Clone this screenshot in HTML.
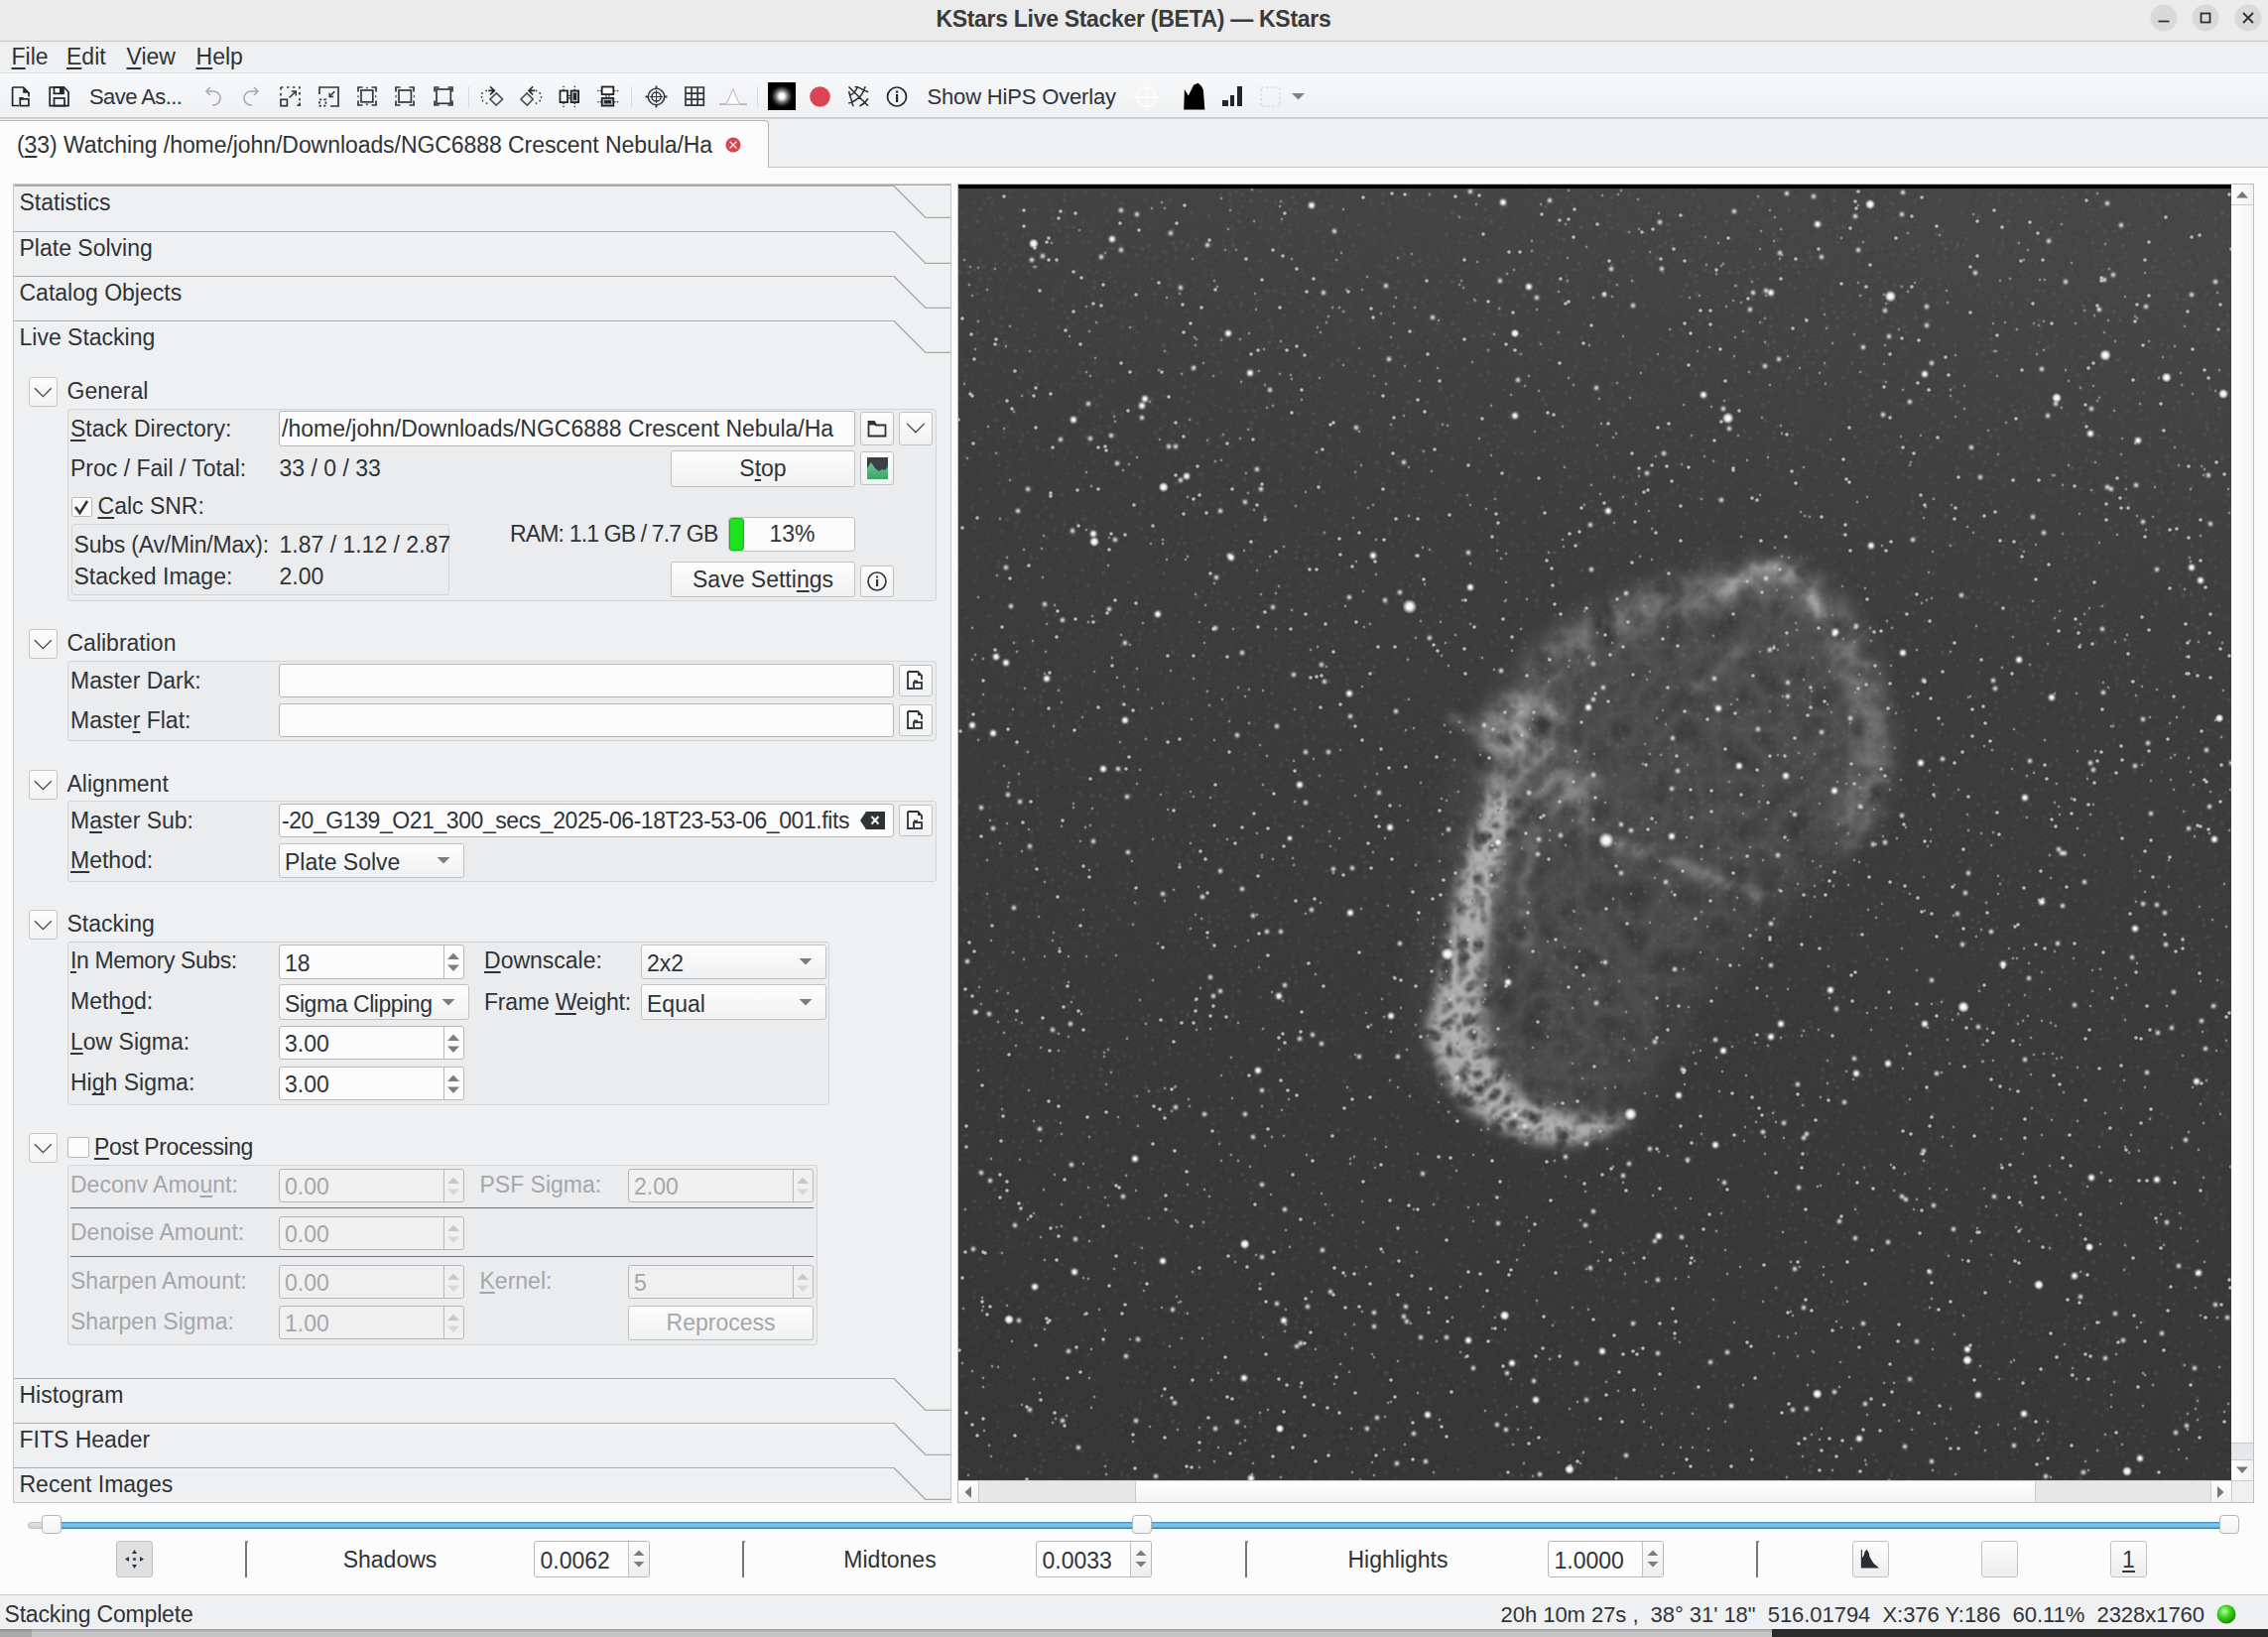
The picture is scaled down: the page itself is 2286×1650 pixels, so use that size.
<!DOCTYPE html>
<html><head><meta charset="utf-8"><style>
html,body{margin:0;padding:0;width:2286px;height:1650px;overflow:hidden;background:#fcfcfc;font-family:"Liberation Sans",sans-serif;}
u{text-decoration:underline;text-underline-offset:3px;text-decoration-thickness:2px;text-decoration-skip-ink:none;}
</style></head><body>
<div style="position:absolute;left:0px;top:0px;width:2286px;height:41px;box-sizing:border-box;background:#ebebeb;"></div>
<div style="position:absolute;left:0px;top:41px;width:2286px;height:1px;box-sizing:border-box;background:#c4c4c4;"></div>
<div style="position:absolute;left:943.4px;top:8.03px;font-size:23px;line-height:23px;color:#3a3a3a;font-weight:bold;white-space:pre;letter-spacing:-0.303px;">KStars Live Stacker (BETA) — KStars</div>
<svg style="position:absolute;left:2166.5px;top:4px;" width="28" height="28" viewBox="0 0 28 28"><circle cx="14" cy="14" r="13.5" fill="#d9d9d9"/></svg>
<svg style="position:absolute;left:2209px;top:4px;" width="28" height="28" viewBox="0 0 28 28"><circle cx="14" cy="14" r="13.5" fill="#d9d9d9"/></svg>
<svg style="position:absolute;left:2251.5px;top:4px;" width="28" height="28" viewBox="0 0 28 28"><circle cx="14" cy="14" r="13.5" fill="#d9d9d9"/></svg>
<svg style="position:absolute;left:2166.5px;top:4px;" width="28" height="28" viewBox="0 0 28 28"><path d="M8.5 17.5 H19.5" stroke="#2e2e2e" stroke-width="1.8"/></svg>
<svg style="position:absolute;left:2209px;top:4px;" width="28" height="28" viewBox="0 0 28 28"><rect x="9.5" y="9.5" width="9" height="9" fill="none" stroke="#2e2e2e" stroke-width="1.8"/></svg>
<svg style="position:absolute;left:2251.5px;top:4px;" width="28" height="28" viewBox="0 0 28 28"><path d="M9 9 L19 19 M19 9 L9 19" stroke="#2e2e2e" stroke-width="1.8"/></svg>
<div style="position:absolute;left:0px;top:42px;width:2286px;height:31px;box-sizing:border-box;background:#eff0f1;"></div>
<div style="position:absolute;left:0px;top:72.5px;width:2286px;height:2.0px;box-sizing:border-box;background:#dedfe1;"></div>
<div style="position:absolute;left:11.5px;top:46.03px;font-size:23px;line-height:23px;color:#2f3337;font-weight:normal;white-space:pre;"><u>F</u>ile</div>
<div style="position:absolute;left:67px;top:46.03px;font-size:23px;line-height:23px;color:#2f3337;font-weight:normal;white-space:pre;"><u>E</u>dit</div>
<div style="position:absolute;left:127.5px;top:46.03px;font-size:23px;line-height:23px;color:#2f3337;font-weight:normal;white-space:pre;"><u>V</u>iew</div>
<div style="position:absolute;left:197.5px;top:46.03px;font-size:23px;line-height:23px;color:#2f3337;font-weight:normal;white-space:pre;"><u>H</u>elp</div>
<div style="position:absolute;left:0px;top:74px;width:2286px;height:44px;box-sizing:border-box;background:linear-gradient(#f8f9fa,#eef0f2);"></div>
<div style="position:absolute;left:0px;top:118px;width:2286px;height:2px;box-sizing:border-box;background:#cdcfd0;"></div>
<div style="position:absolute;left:0px;top:120px;width:2286px;height:49px;box-sizing:border-box;background:#eff0f1;"></div>
<div style="position:absolute;left:0px;top:168px;width:2286px;height:1px;box-sizing:border-box;background:#c3c5c7;"></div>
<div style="position:absolute;left:-2px;top:121px;width:777px;height:49px;box-sizing:border-box;background:#fcfcfc;border-right:1.5px solid #b4b6b8;border-top:1.5px solid #b4b6b8;border-top-right-radius:4px;"></div>
<div style="position:absolute;left:17px;top:134.53px;font-size:23px;line-height:23px;color:#2f3337;font-weight:normal;white-space:pre;letter-spacing:-0.063px;">(<u>3</u>3) Watching /home/john/Downloads/NGC6888 Crescent Nebula/Ha</div>
<svg style="position:absolute;left:730px;top:137px;" width="18" height="18" viewBox="0 0 18 18"><circle cx="9" cy="9" r="7.6" fill="#da4453"/><path d="M5.6 5.6 L12.4 12.4 M12.4 5.6 L5.6 12.4" stroke="#fff" stroke-width="1.3"/></svg>
<div style="position:absolute;left:0px;top:169px;width:2286px;height:1438px;box-sizing:border-box;background:#fcfcfc;"></div>
<div style="position:absolute;left:0px;top:1607px;width:2286px;height:1px;box-sizing:border-box;background:#c9cbcd;"></div>
<div style="position:absolute;left:0px;top:1608px;width:2286px;height:34px;box-sizing:border-box;background:#eff0f1;"></div>
<div style="position:absolute;left:4.5px;top:1616.03px;font-size:23px;line-height:23px;color:#2f3337;font-weight:normal;white-space:pre;letter-spacing:-0.179px;">Stacking Complete</div>
<div style="position:absolute;left:1512.6px;top:1616.88px;font-size:22px;line-height:22px;color:#2f3337;font-weight:normal;white-space:pre;letter-spacing:-0.043px;">20h 10m 27s ,  38° 31' 18"  516.01794  X:376 Y:186  60.11%  2328x1760</div>
<svg style="position:absolute;left:2234px;top:1617px;" width="20" height="20" viewBox="0 0 20 20"><defs><radialGradient id="gg" cx="0.4" cy="0.35" r="0.65"><stop offset="0" stop-color="#b6ff9a"/><stop offset="0.5" stop-color="#3ad11c"/><stop offset="1" stop-color="#1c8a0c"/></radialGradient></defs><circle cx="10" cy="10" r="9.5" fill="url(#gg)"/></svg>
<div style="position:absolute;left:0px;top:1642px;width:2286px;height:8px;box-sizing:border-box;background:linear-gradient(#9a9a9a,#c4c4c4 40%,#c6c6c6);"></div>
<div style="position:absolute;left:0px;top:1642px;width:32px;height:8px;box-sizing:border-box;background:linear-gradient(#8a8a8a,#a8a8a8 40%,#aaaaaa);"></div>
<div style="position:absolute;left:1786px;top:1642px;width:500px;height:8px;box-sizing:border-box;background:#2b2b2b;"></div>
<svg style="position:absolute;left:11px;top:87px;" width="20" height="21" viewBox="0 0 20 21"><path d="M1.6 1 H12.5 L18 6.5 V10.5 M8 19.5 H1.6 V1" fill="none" stroke="#232629" stroke-width="1.7"/><path d="M12.2 1 L18 6.8 H12.2Z" fill="#232629"/><rect x="9.3" y="12.8" width="8.6" height="6.8" fill="none" stroke="#232629" stroke-width="1.7"/><rect x="8.5" y="11" width="4" height="2.2" fill="#232629"/></svg>
<svg style="position:absolute;left:49px;top:87px;" width="21" height="21" viewBox="0 0 21 21"><path d="M1.2 1 H15.5 L20 5.5 V19.6 H1.2 Z" fill="none" stroke="#232629" stroke-width="1.7"/><rect x="5.5" y="1" width="9.5" height="6.3" fill="none" stroke="#232629" stroke-width="1.7"/><rect x="11" y="1.5" width="3.6" height="5.5" fill="#232629"/><rect x="5.5" y="12" width="10.5" height="7.6" fill="none" stroke="#232629" stroke-width="1.7"/></svg>
<div style="position:absolute;left:90px;top:86.98px;font-size:22px;line-height:22px;color:#2f3337;font-weight:normal;white-space:pre;letter-spacing:-0.566px;">Save As...</div>
<svg style="position:absolute;left:206px;top:87px;" width="18" height="21" viewBox="0 0 18 21"><path d="M2 5 H9 A7 7 0 0 1 9 19 H8" fill="none" stroke="#a6a8aa" stroke-width="1.6"/><path d="M6 1 L2 5 L6 9" fill="none" stroke="#a6a8aa" stroke-width="1.6"/></svg>
<svg style="position:absolute;left:244px;top:87px;" width="18" height="21" viewBox="0 0 18 21"><path d="M16 5 H9 A7 7 0 0 0 9 19 H10" fill="none" stroke="#a6a8aa" stroke-width="1.6"/><path d="M12 1 L16 5 L12 9" fill="none" stroke="#a6a8aa" stroke-width="1.6"/></svg>
<svg style="position:absolute;left:282px;top:87px;" width="21" height="21" viewBox="0 0 21 21"><path d="M1 1 H20 V20 M1 1 V10" fill="none" stroke="#35383b" stroke-width="1.7" stroke-dasharray="2.4 3.6"/><path d="M17.5 19.2 H20 V16.5" fill="none" stroke="#35383b" stroke-width="1.7"/><rect x="1" y="13.3" width="6.4" height="6.4" fill="none" stroke="#35383b" stroke-width="1.7"/><path d="M9.5 11.5 L16.3 5 M11.8 5 H16.3 V9.5" fill="none" stroke="#35383b" stroke-width="1.5"/></svg>
<svg style="position:absolute;left:321px;top:87px;" width="21" height="21" viewBox="0 0 21 21"><path d="M1 8 V1 H20 V20 H12" fill="none" stroke="#35383b" stroke-width="1.7"/><rect x="1" y="13.3" width="6.4" height="6.4" fill="none" stroke="#35383b" stroke-width="1.7" stroke-dasharray="2.2 2.1"/><path d="M16.3 5 L11.2 10.6 M11.2 6.8 V10.6 H15.2" fill="none" stroke="#35383b" stroke-width="1.5"/></svg>
<svg style="position:absolute;left:360px;top:87px;" width="21" height="21" viewBox="0 0 21 21"><path d="M1 5.5 V1 H5.5 M14.5 1 H19 V5.5 M19 14.5 V19 H14.5 M5.5 19 H1 V14.5" fill="none" stroke="#35383b" stroke-width="1.7"/><rect x="4" y="4" width="11.8" height="11.8" fill="none" stroke="#35383b" stroke-width="1.7"/><path d="M8.3 2.2 L9.9 0.4 L11.5 2.2Z M8.3 17.6 L9.9 19.6 L11.5 17.6Z M1.6 8.6 L0 10.2 L1.6 11.8Z M18.2 8.6 L19.8 10.2 L18.2 11.8Z" fill="#35383b"/></svg>
<svg style="position:absolute;left:398px;top:87px;" width="21" height="21" viewBox="0 0 21 21"><path d="M1 5.5 V1 H5.5 M14.5 1 H19 V5.5 M19 14.5 V19 H14.5 M5.5 19 H1 V14.5" fill="none" stroke="#35383b" stroke-width="1.7"/><rect x="4" y="4" width="12.4" height="12" fill="none" stroke="#35383b" stroke-width="1.7"/><path d="M1.6 8.6 L0 10.2 L1.6 11.8Z M18.8 8.6 L20.4 10.2 L18.8 11.8Z" fill="#35383b"/></svg>
<svg style="position:absolute;left:437px;top:87px;" width="21" height="21" viewBox="0 0 21 21"><path d="M1 5.5 V1 H5.5 M14.5 1 H19 V5.5 M19 14.5 V19 H14.5 M5.5 19 H1 V14.5" fill="none" stroke="#35383b" stroke-width="1.7"/><rect x="3" y="3" width="14.3" height="14.3" fill="none" stroke="#35383b" stroke-width="1.7"/></svg>
<div style="position:absolute;left:472px;top:87px;width:1px;height:21px;box-sizing:border-box;background:#d9dadc;"></div>
<svg style="position:absolute;left:484px;top:86px;" width="24" height="22" viewBox="0 0 24 22"><circle cx="6.2" cy="5.4" r="0.85" fill="#232629"/><circle cx="2.1" cy="7.9" r="0.85" fill="#232629"/><circle cx="1.5" cy="11.8" r="0.85" fill="#232629"/><circle cx="2.5" cy="15.6" r="0.85" fill="#232629"/><circle cx="6.6" cy="18.1" r="0.85" fill="#232629"/><path d="M8.3 5.4 H14.4 M10 1.3 L14.4 5.4 L10 9.5" fill="none" stroke="#232629" stroke-width="1.6"/><path d="M16.4 7.9 L22.6 14 L16.1 20.1 L10 14Z" fill="none" stroke="#4a4d50" stroke-width="1.6"/></svg>
<svg style="position:absolute;left:524px;top:86px;" width="24" height="22" viewBox="0 0 24 22"><circle cx="16.5" cy="5.4" r="0.85" fill="#232629"/><circle cx="20.2" cy="7.9" r="0.85" fill="#232629"/><circle cx="21.5" cy="11.8" r="0.85" fill="#232629"/><circle cx="20.2" cy="15.6" r="0.85" fill="#232629"/><circle cx="16.5" cy="18.1" r="0.85" fill="#232629"/><path d="M15.1 5.4 H9 M13.1 1.3 L9 5.4 L13.1 9.5" fill="none" stroke="#232629" stroke-width="1.6"/><path d="M7 7.9 L13.2 14 L7.3 20.1 L1 14Z" fill="none" stroke="#4a4d50" stroke-width="1.6"/></svg>
<svg style="position:absolute;left:563px;top:86px;" width="22" height="23" viewBox="0 0 22 23"><circle cx="5" cy="1.3" r="0.8" fill="#232629"/><circle cx="5" cy="4.3" r="0.8" fill="#232629"/><circle cx="5" cy="18.5" r="0.8" fill="#232629"/><circle cx="5" cy="21.5" r="0.8" fill="#232629"/><circle cx="16.3" cy="1.3" r="0.8" fill="#232629"/><circle cx="16.3" cy="4.3" r="0.8" fill="#232629"/><circle cx="16.3" cy="18.5" r="0.8" fill="#232629"/><circle cx="16.3" cy="21.5" r="0.8" fill="#232629"/><rect x="1.5" y="5.5" width="7.5" height="11.6" fill="#fafafa" stroke="#232629" stroke-width="1.8"/><rect x="12.6" y="5.5" width="7.5" height="11.6" fill="#b9bbbd" stroke="#232629" stroke-width="1.8"/><rect x="14.8" y="7.8" width="3.2" height="7" fill="#232629"/><path d="M9 10.4 H12.6 M9 12.9 H12.6" stroke="#232629" stroke-width="1"/></svg>
<svg style="position:absolute;left:601px;top:86px;" width="23" height="22" viewBox="0 0 23 22"><circle cx="1.9" cy="5.5" r="0.8" fill="#232629"/><circle cx="4.6" cy="5.5" r="0.8" fill="#232629"/><circle cx="18.9" cy="5.5" r="0.8" fill="#232629"/><circle cx="21.6" cy="5.5" r="0.8" fill="#232629"/><circle cx="1.9" cy="16.7" r="0.8" fill="#232629"/><circle cx="4.6" cy="16.7" r="0.8" fill="#232629"/><circle cx="18.9" cy="16.7" r="0.8" fill="#232629"/><circle cx="21.6" cy="16.7" r="0.8" fill="#232629"/><rect x="5.7" y="1.5" width="11.6" height="7.6" fill="#fafafa" stroke="#232629" stroke-width="1.8"/><rect x="5.7" y="13" width="11.6" height="7.6" fill="#b9bbbd" stroke="#232629" stroke-width="1.8"/><rect x="8" y="15.1" width="7" height="3.3" fill="#232629"/><path d="M10 9.1 V13 M13 9.1 V13" stroke="#232629" stroke-width="1"/></svg>
<div style="position:absolute;left:636px;top:87px;width:1px;height:21px;box-sizing:border-box;background:#d9dadc;"></div>
<svg style="position:absolute;left:650px;top:86px;" width="23" height="23" viewBox="0 0 23 23"><circle cx="11.5" cy="11.5" r="8.2" fill="none" stroke="#35383b" stroke-width="1.6"/><circle cx="11.5" cy="11.5" r="4.6" fill="none" stroke="#35383b" stroke-width="1.5"/><path d="M11.5 0.5 V4 M11.5 19 V22.5 M0.5 11.5 H4 M19 11.5 H22.5" stroke="#35383b" stroke-width="1.8"/><path d="M11.5 5 V18 M5 11.5 H18" stroke="#35383b" stroke-width="1"/></svg>
<svg style="position:absolute;left:690px;top:87px;" width="21" height="21" viewBox="0 0 21 21"><path d="M1 1 H19.3 V19.2 H1Z M7.1 1 V19.2 M13.2 1 V19.2 M1 7.1 H19.3 M1 13.2 H19.3" fill="none" stroke="#35383b" stroke-width="1.7"/></svg>
<svg style="position:absolute;left:724px;top:88px;" width="30" height="19" viewBox="0 0 30 19"><path d="M1 17 H6 Q9 17 10.5 12 L14.8 1.5 L19 12 Q20.5 17 24 17 H29" fill="#fff" stroke="#b4aed6" stroke-width="1"/><path d="M1 17.2 H29" stroke="#a9abad" stroke-width="1"/></svg>
<div style="position:absolute;left:763px;top:87px;width:1px;height:21px;box-sizing:border-box;background:#d9dadc;"></div>
<svg style="position:absolute;left:774px;top:83px;" width="28" height="28" viewBox="0 0 28 28"><defs><radialGradient id="glow" cx="0.5" cy="0.5" r="0.5"><stop offset="0" stop-color="#fff"/><stop offset="0.2" stop-color="#fff"/><stop offset="0.5" stop-color="#707070"/><stop offset="0.8" stop-color="#0c0c0c"/><stop offset="1" stop-color="#000"/></radialGradient></defs><rect width="28" height="28" fill="#000"/><circle cx="14" cy="14" r="12.5" fill="url(#glow)"/></svg>
<svg style="position:absolute;left:816px;top:87px;" width="21" height="21" viewBox="0 0 21 21"><circle cx="10.5" cy="10.5" r="10.3" fill="#da4453"/></svg>
<svg style="position:absolute;left:855px;top:87px;" width="21" height="21" viewBox="0 0 21 21"><path d="M0.5 0.5 L20 19.8 M0.3 17 Q8 15 13 9 Q16 5 17.2 0.3 M6.5 0.6 L9.6 0.8 Q15 3.5 20.2 5.8 M0.6 5 L1.6 9 Q3 13 4.4 18.5 L5.4 20 M1.6 9 Q6.5 7.5 9.4 0.8 M11.5 20 Q16.5 17.5 20 12.5" fill="none" stroke="#2a2e32" stroke-width="1.5"/></svg>
<svg style="position:absolute;left:893px;top:87px;" width="22" height="21" viewBox="0 0 22 21"><circle cx="11" cy="10.5" r="9.5" fill="none" stroke="#232629" stroke-width="1.7"/><rect x="10" y="8" width="2.2" height="8" fill="#232629"/><rect x="10" y="4.5" width="2.2" height="2.2" fill="#232629"/></svg>
<div style="position:absolute;left:934.5px;top:86.98px;font-size:22px;line-height:22px;color:#2f3337;font-weight:normal;white-space:pre;letter-spacing:-0.164px;">Show HiPS Overlay</div>
<svg style="position:absolute;left:1142px;top:85px;" width="27" height="26" viewBox="0 0 27 26"><circle cx="13.5" cy="13" r="9.5" fill="none" stroke="#fdfdfd" stroke-width="1.6"/><path d="M13.5 0 V26 M0 13 H27" stroke="#fdfdfd" stroke-width="1.4"/></svg>
<svg style="position:absolute;left:1190px;top:83px;" width="27" height="28" viewBox="0 0 27 28"><path d="M3.2 27.4 L3.9 7.1 L7.8 13.4 L10 9 L13.1 2.7 L17.5 0.8 L20.9 3.7 L22.8 7.5 L23.5 16 L24.3 27.4 Z" fill="#000"/></svg>
<div style="position:absolute;left:1232px;top:101px;width:6px;height:6px;box-sizing:border-box;background:#232629;"></div>
<div style="position:absolute;left:1240px;top:96px;width:4px;height:11px;box-sizing:border-box;background:#232629;"></div>
<div style="position:absolute;left:1247px;top:87px;width:5px;height:20px;box-sizing:border-box;background:#232629;"></div>
<svg style="position:absolute;left:1270px;top:87px;" width="21" height="21" viewBox="0 0 21 21"><rect x="1" y="1" width="19" height="19" fill="none" stroke="#cdd0d2" stroke-width="1.1" stroke-dasharray="2.6 2.2"/></svg>
<svg style="position:absolute;left:1302px;top:94px;" width="14" height="7" viewBox="0 0 14 7"><path d="M0 0 H13 L6.5 6.5Z" fill="#7f8285"/></svg>
<div style="position:absolute;left:13px;top:185px;width:946px;height:1330px;box-sizing:border-box;background:#eff0f1;border:1px solid #c4c6c8;"></div>
<div style="position:absolute;left:15px;top:186px;width:943px;height:1px;box-sizing:border-box;background:#a9abad;"></div>
<svg style="position:absolute;left:14px;top:186.5px;" width="944" height="33" viewBox="0 0 944 33"><path d="M0 0.5 H887 L919 32.5 H944" fill="none" stroke="#a9abad" stroke-width="1.4"/><path d="M0 1.8 H887" stroke="#fbfbfc" stroke-width="1"/></svg>
<div style="position:absolute;left:19.5px;top:192.53px;font-size:23px;line-height:23px;color:#2f3337;font-weight:normal;white-space:pre;">Statistics</div>
<svg style="position:absolute;left:14px;top:232.5px;" width="944" height="33" viewBox="0 0 944 33"><path d="M0 0.5 H887 L919 32.5 H944" fill="none" stroke="#a9abad" stroke-width="1.4"/><path d="M0 1.8 H887" stroke="#fbfbfc" stroke-width="1"/></svg>
<div style="position:absolute;left:19.5px;top:238.53px;font-size:23px;line-height:23px;color:#2f3337;font-weight:normal;white-space:pre;">Plate Solving</div>
<svg style="position:absolute;left:14px;top:277.5px;" width="944" height="33" viewBox="0 0 944 33"><path d="M0 0.5 H887 L919 32.5 H944" fill="none" stroke="#a9abad" stroke-width="1.4"/><path d="M0 1.8 H887" stroke="#fbfbfc" stroke-width="1"/></svg>
<div style="position:absolute;left:19.5px;top:283.53px;font-size:23px;line-height:23px;color:#2f3337;font-weight:normal;white-space:pre;">Catalog Objects</div>
<svg style="position:absolute;left:14px;top:322.5px;" width="944" height="33" viewBox="0 0 944 33"><path d="M0 0.5 H887 L919 32.5 H944" fill="none" stroke="#a9abad" stroke-width="1.4"/><path d="M0 1.8 H887" stroke="#fbfbfc" stroke-width="1"/></svg>
<div style="position:absolute;left:19.5px;top:328.53px;font-size:23px;line-height:23px;color:#2f3337;font-weight:normal;white-space:pre;">Live Stacking</div>
<svg style="position:absolute;left:14px;top:1389px;" width="944" height="33" viewBox="0 0 944 33"><path d="M0 0.5 H887 L919 32.5 H944" fill="none" stroke="#a9abad" stroke-width="1.4"/><path d="M0 1.8 H887" stroke="#fbfbfc" stroke-width="1"/></svg>
<div style="position:absolute;left:19.5px;top:1395.03px;font-size:23px;line-height:23px;color:#2f3337;font-weight:normal;white-space:pre;">Histogram</div>
<svg style="position:absolute;left:14px;top:1434px;" width="944" height="33" viewBox="0 0 944 33"><path d="M0 0.5 H887 L919 32.5 H944" fill="none" stroke="#a9abad" stroke-width="1.4"/><path d="M0 1.8 H887" stroke="#fbfbfc" stroke-width="1"/></svg>
<div style="position:absolute;left:19.5px;top:1440.03px;font-size:23px;line-height:23px;color:#2f3337;font-weight:normal;white-space:pre;">FITS Header</div>
<svg style="position:absolute;left:14px;top:1479px;" width="944" height="33" viewBox="0 0 944 33"><path d="M0 0.5 H887 L919 32.5 H944" fill="none" stroke="#a9abad" stroke-width="1.4"/><path d="M0 1.8 H887" stroke="#fbfbfc" stroke-width="1"/></svg>
<div style="position:absolute;left:19.5px;top:1485.03px;font-size:23px;line-height:23px;color:#2f3337;font-weight:normal;white-space:pre;">Recent Images</div>
<div style="position:absolute;left:29px;top:380px;width:29px;height:30px;box-sizing:border-box;background:linear-gradient(#fcfcfc,#f2f3f4);border:1px solid #c3c5c7;border-radius:3px;"></div>
<svg style="position:absolute;left:29px;top:380px;" width="29" height="30" viewBox="0 0 29 30"><path d="M6 11.3 L14.4 19.6 L22.8 11.3" fill="none" stroke="#43474b" stroke-width="1.3"/></svg>
<div style="position:absolute;left:67.5px;top:382.53px;font-size:23px;line-height:23px;color:#2f3337;font-weight:normal;white-space:pre;">General</div>
<div style="position:absolute;left:68px;top:412px;width:876px;height:194px;box-sizing:border-box;background:#ebecee;border:1px solid #d3d5d7;border-radius:3px;"></div>
<div style="position:absolute;left:71px;top:420.53px;font-size:23px;line-height:23px;color:#2f3337;font-weight:normal;white-space:pre;"><u>S</u>tack Directory:</div>
<div style="position:absolute;left:281px;top:414px;width:581px;height:36px;box-sizing:border-box;background:#fcfcfc;border:1px solid #b5b7b9;border-radius:3px;"></div>
<div style="position:absolute;left:284px;top:420.53px;font-size:23px;line-height:23px;color:#2f3337;font-weight:normal;white-space:pre;">/home/john/Downloads/NGC6888 Crescent Nebula/Ha</div>
<div style="position:absolute;left:867px;top:415px;width:34px;height:34px;box-sizing:border-box;background:linear-gradient(#fdfdfd,#f0f1f2);border:1px solid #bfc1c3;border-radius:3px;"></div>
<svg style="position:absolute;left:874px;top:422px;" width="20" height="19" viewBox="0 0 20 19"><path d="M1.5 4.5 V17.5 H18.5 V6.5 H9 L7 3 H1.5Z" fill="none" stroke="#2f3337" stroke-width="1.8"/><path d="M1 3 H8 L9.5 6.5 H1Z" fill="#2f3337"/></svg>
<div style="position:absolute;left:906px;top:415px;width:34px;height:34px;box-sizing:border-box;background:linear-gradient(#fdfdfd,#f0f1f2);border:1px solid #bfc1c3;border-radius:3px;"></div>
<svg style="position:absolute;left:906px;top:415px;" width="34" height="34" viewBox="0 0 34 34"><path d="M8.1 11.9 L16.9 20.8 L25.7 11.9" fill="none" stroke="#43474b" stroke-width="1.3"/></svg>
<div style="position:absolute;left:71px;top:460.53px;font-size:23px;line-height:23px;color:#2f3337;font-weight:normal;white-space:pre;">Proc / Fail / Total:</div>
<div style="position:absolute;left:281.5px;top:460.53px;font-size:23px;line-height:23px;color:#2f3337;font-weight:normal;white-space:pre;">33 / 0 / 33</div>
<div style="position:absolute;left:676px;top:454px;width:186px;height:37px;box-sizing:border-box;background:linear-gradient(#fdfdfd,#f0f1f2);border:1px solid #bfc1c3;border-radius:3px;"></div>
<div style="position:absolute;left:-231.0px;width:2000px;text-align:center;top:460.53px;font-size:23px;line-height:23px;color:#2f3337;font-weight:normal;white-space:pre;">S<u>t</u>op</div>
<div style="position:absolute;left:867px;top:455px;width:34px;height:34px;box-sizing:border-box;background:linear-gradient(#fdfdfd,#f0f1f2);border:1px solid #bfc1c3;border-radius:3px;"></div>
<svg style="position:absolute;left:874px;top:461px;" width="21" height="22" viewBox="0 0 21 22"><defs><linearGradient id="chg" x1="0" y1="0" x2="0" y2="1"><stop offset="0" stop-color="#6fc28e"/><stop offset="1" stop-color="#3ea36a"/></linearGradient></defs><rect width="21" height="22" fill="#3b4046"/><path d="M0 22 V11 L4 5 L8 11 L12 14 L15 12 L18 13 L21 9 V22Z" fill="url(#chg)"/></svg>
<div style="position:absolute;left:72px;top:501px;width:21px;height:20px;box-sizing:border-box;background:#fcfcfc;border:1px solid #b9bbbd;border-radius:2px;"></div>
<svg style="position:absolute;left:72px;top:501px;" width="21" height="20" viewBox="0 0 21 20"><path d="M4 10 L8.5 16 L16 4" fill="none" stroke="#2f3337" stroke-width="2.6"/></svg>
<div style="position:absolute;left:98.5px;top:498.53px;font-size:23px;line-height:23px;color:#2f3337;font-weight:normal;white-space:pre;"><u>C</u>alc SNR:</div>
<div style="position:absolute;left:72px;top:528px;width:381px;height:72px;box-sizing:border-box;background:#ebecee;border:1px solid #d3d5d7;border-radius:3px;"></div>
<div style="position:absolute;left:74.5px;top:538.03px;font-size:23px;line-height:23px;color:#2f3337;font-weight:normal;white-space:pre;letter-spacing:-0.214px;">Subs (Av/Min/Max):</div>
<div style="position:absolute;left:281.5px;top:538.03px;font-size:23px;line-height:23px;color:#2f3337;font-weight:normal;white-space:pre;">1.87 / 1.12 / 2.87</div>
<div style="position:absolute;left:74.5px;top:569.53px;font-size:23px;line-height:23px;color:#2f3337;font-weight:normal;white-space:pre;">Stacked Image:</div>
<div style="position:absolute;left:281.5px;top:569.53px;font-size:23px;line-height:23px;color:#2f3337;font-weight:normal;white-space:pre;">2.00</div>
<div style="position:absolute;left:514px;top:527.03px;font-size:23px;line-height:23px;color:#2f3337;font-weight:normal;white-space:pre;letter-spacing:-0.842px;">RAM: 1.1 GB / 7.7 GB</div>
<div style="position:absolute;left:734px;top:521px;width:128px;height:35px;box-sizing:border-box;background:#fcfcfc;border:1px solid #bfc1c3;border-radius:3px;"></div>
<div style="position:absolute;left:735px;top:522px;width:15px;height:33px;box-sizing:border-box;background:#1fe21f;border:1px solid #18b418;border-radius:3px;"></div>
<div style="position:absolute;left:-201.5px;width:2000px;text-align:center;top:527.03px;font-size:23px;line-height:23px;color:#2f3337;font-weight:normal;white-space:pre;">13%</div>
<div style="position:absolute;left:676px;top:566px;width:186px;height:36px;box-sizing:border-box;background:linear-gradient(#fdfdfd,#f0f1f2);border:1px solid #bfc1c3;border-radius:3px;"></div>
<div style="position:absolute;left:-231.0px;width:2000px;text-align:center;top:572.53px;font-size:23px;line-height:23px;color:#2f3337;font-weight:normal;white-space:pre;">Save Setti<u>n</u>gs</div>
<div style="position:absolute;left:867px;top:570px;width:34px;height:32px;box-sizing:border-box;background:linear-gradient(#fdfdfd,#f0f1f2);border:1px solid #bfc1c3;border-radius:3px;"></div>
<svg style="position:absolute;left:873px;top:575px;" width="22" height="22" viewBox="0 0 22 22"><circle cx="11" cy="11" r="9" fill="none" stroke="#2f3337" stroke-width="1.6"/><rect x="10" y="9" width="2.2" height="7" fill="#2f3337"/><rect x="10" y="5.5" width="2.2" height="2" fill="#2f3337"/></svg>
<div style="position:absolute;left:29px;top:634px;width:29px;height:30px;box-sizing:border-box;background:linear-gradient(#fcfcfc,#f2f3f4);border:1px solid #c3c5c7;border-radius:3px;"></div>
<svg style="position:absolute;left:29px;top:634px;" width="29" height="30" viewBox="0 0 29 30"><path d="M6 11.3 L14.4 19.6 L22.8 11.3" fill="none" stroke="#43474b" stroke-width="1.3"/></svg>
<div style="position:absolute;left:67.5px;top:637.03px;font-size:23px;line-height:23px;color:#2f3337;font-weight:normal;white-space:pre;">Calibration</div>
<div style="position:absolute;left:68px;top:666px;width:876px;height:81px;box-sizing:border-box;background:#ebecee;border:1px solid #d3d5d7;border-radius:3px;"></div>
<div style="position:absolute;left:71px;top:674.53px;font-size:23px;line-height:23px;color:#2f3337;font-weight:normal;white-space:pre;">Master Dark:</div>
<div style="position:absolute;left:281px;top:669px;width:620px;height:34px;box-sizing:border-box;background:#fcfcfc;border:1px solid #b5b7b9;border-radius:3px;"></div>
<div style="position:absolute;left:906px;top:670px;width:34px;height:32px;box-sizing:border-box;background:linear-gradient(#fdfdfd,#f0f1f2);border:1px solid #bfc1c3;border-radius:3px;"></div>
<svg style="position:absolute;left:914px;top:676px;" width="18" height="20" viewBox="0 0 18 20"><path d="M1 1 H11 L15 5 V9 M6 18 H1 V1" fill="none" stroke="#2f3337" stroke-width="1.8"/><path d="M11 1 L15 5 H11Z" fill="#2f3337"/><rect x="7" y="12" width="8" height="6" fill="none" stroke="#2f3337" stroke-width="1.8"/><path d="M7 10.5 H11" stroke="#2f3337" stroke-width="1.8"/></svg>
<div style="position:absolute;left:71px;top:715.03px;font-size:23px;line-height:23px;color:#2f3337;font-weight:normal;white-space:pre;">Maste<u>r</u> Flat:</div>
<div style="position:absolute;left:281px;top:709px;width:620px;height:34px;box-sizing:border-box;background:#fcfcfc;border:1px solid #b5b7b9;border-radius:3px;"></div>
<div style="position:absolute;left:906px;top:710px;width:34px;height:32px;box-sizing:border-box;background:linear-gradient(#fdfdfd,#f0f1f2);border:1px solid #bfc1c3;border-radius:3px;"></div>
<svg style="position:absolute;left:914px;top:716px;" width="18" height="20" viewBox="0 0 18 20"><path d="M1 1 H11 L15 5 V9 M6 18 H1 V1" fill="none" stroke="#2f3337" stroke-width="1.8"/><path d="M11 1 L15 5 H11Z" fill="#2f3337"/><rect x="7" y="12" width="8" height="6" fill="none" stroke="#2f3337" stroke-width="1.8"/><path d="M7 10.5 H11" stroke="#2f3337" stroke-width="1.8"/></svg>
<div style="position:absolute;left:29px;top:776px;width:29px;height:30px;box-sizing:border-box;background:linear-gradient(#fcfcfc,#f2f3f4);border:1px solid #c3c5c7;border-radius:3px;"></div>
<svg style="position:absolute;left:29px;top:776px;" width="29" height="30" viewBox="0 0 29 30"><path d="M6 11.3 L14.4 19.6 L22.8 11.3" fill="none" stroke="#43474b" stroke-width="1.3"/></svg>
<div style="position:absolute;left:67.5px;top:778.53px;font-size:23px;line-height:23px;color:#2f3337;font-weight:normal;white-space:pre;">Alignment</div>
<div style="position:absolute;left:68px;top:807px;width:876px;height:82px;box-sizing:border-box;background:#ebecee;border:1px solid #d3d5d7;border-radius:3px;"></div>
<div style="position:absolute;left:71px;top:815.53px;font-size:23px;line-height:23px;color:#2f3337;font-weight:normal;white-space:pre;">M<u>a</u>ster Sub:</div>
<div style="position:absolute;left:281px;top:810px;width:620px;height:34px;box-sizing:border-box;background:#fcfcfc;border:1px solid #b5b7b9;border-radius:3px;"></div>
<div style="position:absolute;left:284px;top:815.53px;font-size:23px;line-height:23px;color:#2f3337;font-weight:normal;white-space:pre;letter-spacing:-0.427px;">-20_G139_O21_300_secs_2025-06-18T23-53-06_001.fits</div>
<svg style="position:absolute;left:867px;top:818px;" width="25" height="18" viewBox="0 0 25 18"><path d="M6 0 H25 V18 H6 L0 9Z" fill="#2f3337"/><path d="M11.5 5 L18.5 12.5 M18.5 5 L11.5 12.5" stroke="#fcfcfc" stroke-width="2"/></svg>
<div style="position:absolute;left:906px;top:811px;width:34px;height:32px;box-sizing:border-box;background:linear-gradient(#fdfdfd,#f0f1f2);border:1px solid #bfc1c3;border-radius:3px;"></div>
<svg style="position:absolute;left:914px;top:817px;" width="18" height="20" viewBox="0 0 18 20"><path d="M1 1 H11 L15 5 V9 M6 18 H1 V1" fill="none" stroke="#2f3337" stroke-width="1.8"/><path d="M11 1 L15 5 H11Z" fill="#2f3337"/><rect x="7" y="12" width="8" height="6" fill="none" stroke="#2f3337" stroke-width="1.8"/><path d="M7 10.5 H11" stroke="#2f3337" stroke-width="1.8"/></svg>
<div style="position:absolute;left:71px;top:855.53px;font-size:23px;line-height:23px;color:#2f3337;font-weight:normal;white-space:pre;"><u>M</u>ethod:</div>
<div style="position:absolute;left:281px;top:850px;width:187px;height:35px;box-sizing:border-box;background:linear-gradient(#fdfdfd,#f0f1f2);border:1px solid #bfc1c3;border-radius:3px;"></div>
<div style="position:absolute;left:287px;top:857.53px;font-size:23px;line-height:23px;color:#2f3337;font-weight:normal;white-space:pre;">Plate Solve</div>
<svg style="position:absolute;left:440px;top:863px;" width="14" height="8" viewBox="0 0 14 8"><path d="M0.5 1 H13.5 L7 7.5Z" fill="#7b7e81"/></svg>
<div style="position:absolute;left:29px;top:917px;width:29px;height:30px;box-sizing:border-box;background:linear-gradient(#fcfcfc,#f2f3f4);border:1px solid #c3c5c7;border-radius:3px;"></div>
<svg style="position:absolute;left:29px;top:917px;" width="29" height="30" viewBox="0 0 29 30"><path d="M6 11.3 L14.4 19.6 L22.8 11.3" fill="none" stroke="#43474b" stroke-width="1.3"/></svg>
<div style="position:absolute;left:67.5px;top:919.53px;font-size:23px;line-height:23px;color:#2f3337;font-weight:normal;white-space:pre;">Stacking</div>
<div style="position:absolute;left:68px;top:949px;width:768px;height:165px;box-sizing:border-box;background:#ebecee;border:1px solid #d3d5d7;border-radius:3px;"></div>
<div style="position:absolute;left:71px;top:957.03px;font-size:23px;line-height:23px;color:#2f3337;font-weight:normal;white-space:pre;letter-spacing:-0.403px;"><u>I</u>n Memory Subs:</div>
<div style="position:absolute;left:281px;top:952px;width:187px;height:35px;box-sizing:border-box;background:#fcfcfc;border:1px solid #b5b7b9;border-radius:3px;"></div>
<div style="position:absolute;left:446.5px;top:953px;width:1.0px;height:33px;box-sizing:border-box;background:#b5b7b9;"></div>
<svg style="position:absolute;left:451px;top:959px;" width="12" height="22" viewBox="0 0 12 22"><path d="M0 8 L6 1.5 L12 8Z" fill="#7b7e81"/><path d="M0 13.5 L6 20 L12 13.5Z" fill="#7b7e81"/></svg>
<div style="position:absolute;left:287px;top:960.03px;font-size:23px;line-height:23px;color:#2f3337;font-weight:normal;white-space:pre;">18</div>
<div style="position:absolute;left:488px;top:956.53px;font-size:23px;line-height:23px;color:#2f3337;font-weight:normal;white-space:pre;"><u>D</u>ownscale:</div>
<div style="position:absolute;left:646px;top:952px;width:187px;height:35px;box-sizing:border-box;background:linear-gradient(#fdfdfd,#f0f1f2);border:1px solid #bfc1c3;border-radius:3px;"></div>
<div style="position:absolute;left:652px;top:959.53px;font-size:23px;line-height:23px;color:#2f3337;font-weight:normal;white-space:pre;">2x2</div>
<svg style="position:absolute;left:805px;top:965px;" width="14" height="8" viewBox="0 0 14 8"><path d="M0.5 1 H13.5 L7 7.5Z" fill="#7b7e81"/></svg>
<div style="position:absolute;left:71px;top:998.03px;font-size:23px;line-height:23px;color:#2f3337;font-weight:normal;white-space:pre;">Meth<u>o</u>d:</div>
<div style="position:absolute;left:281px;top:992px;width:192px;height:36px;box-sizing:border-box;background:linear-gradient(#fdfdfd,#f0f1f2);border:1px solid #bfc1c3;border-radius:3px;"></div>
<div style="position:absolute;left:287px;top:1000.53px;font-size:23px;line-height:23px;color:#2f3337;font-weight:normal;white-space:pre;letter-spacing:-0.436px;">Sigma Clipping</div>
<svg style="position:absolute;left:445px;top:1006px;" width="14" height="8" viewBox="0 0 14 8"><path d="M0.5 1 H13.5 L7 7.5Z" fill="#7b7e81"/></svg>
<div style="position:absolute;left:488px;top:998.53px;font-size:23px;line-height:23px;color:#2f3337;font-weight:normal;white-space:pre;letter-spacing:-0.185px;">Frame <u>W</u>eight:</div>
<div style="position:absolute;left:646px;top:992px;width:187px;height:36px;box-sizing:border-box;background:linear-gradient(#fdfdfd,#f0f1f2);border:1px solid #bfc1c3;border-radius:3px;"></div>
<div style="position:absolute;left:652px;top:1000.53px;font-size:23px;line-height:23px;color:#2f3337;font-weight:normal;white-space:pre;">Equal</div>
<svg style="position:absolute;left:805px;top:1006px;" width="14" height="8" viewBox="0 0 14 8"><path d="M0.5 1 H13.5 L7 7.5Z" fill="#7b7e81"/></svg>
<div style="position:absolute;left:71px;top:1038.53px;font-size:23px;line-height:23px;color:#2f3337;font-weight:normal;white-space:pre;"><u>L</u>ow Sigma:</div>
<div style="position:absolute;left:281px;top:1034px;width:187px;height:34px;box-sizing:border-box;background:#fcfcfc;border:1px solid #b5b7b9;border-radius:3px;"></div>
<div style="position:absolute;left:446.5px;top:1035px;width:1.0px;height:32px;box-sizing:border-box;background:#b5b7b9;"></div>
<svg style="position:absolute;left:451px;top:1041px;" width="12" height="22" viewBox="0 0 12 22"><path d="M0 8 L6 1.5 L12 8Z" fill="#7b7e81"/><path d="M0 13.5 L6 20 L12 13.5Z" fill="#7b7e81"/></svg>
<div style="position:absolute;left:287px;top:1041.03px;font-size:23px;line-height:23px;color:#2f3337;font-weight:normal;white-space:pre;">3.00</div>
<div style="position:absolute;left:71px;top:1079.53px;font-size:23px;line-height:23px;color:#2f3337;font-weight:normal;white-space:pre;">Hi<u>g</u>h Sigma:</div>
<div style="position:absolute;left:281px;top:1075px;width:187px;height:34px;box-sizing:border-box;background:#fcfcfc;border:1px solid #b5b7b9;border-radius:3px;"></div>
<div style="position:absolute;left:446.5px;top:1076px;width:1.0px;height:32px;box-sizing:border-box;background:#b5b7b9;"></div>
<svg style="position:absolute;left:451px;top:1082px;" width="12" height="22" viewBox="0 0 12 22"><path d="M0 8 L6 1.5 L12 8Z" fill="#7b7e81"/><path d="M0 13.5 L6 20 L12 13.5Z" fill="#7b7e81"/></svg>
<div style="position:absolute;left:287px;top:1082.03px;font-size:23px;line-height:23px;color:#2f3337;font-weight:normal;white-space:pre;">3.00</div>
<div style="position:absolute;left:29px;top:1142px;width:29px;height:30px;box-sizing:border-box;background:linear-gradient(#fcfcfc,#f2f3f4);border:1px solid #c3c5c7;border-radius:3px;"></div>
<svg style="position:absolute;left:29px;top:1142px;" width="29" height="30" viewBox="0 0 29 30"><path d="M6 11.3 L14.4 19.6 L22.8 11.3" fill="none" stroke="#43474b" stroke-width="1.3"/></svg>
<div style="position:absolute;left:68px;top:1146px;width:22px;height:21px;box-sizing:border-box;background:#fcfcfc;border:1px solid #b9bbbd;border-radius:2px;"></div>
<div style="position:absolute;left:95px;top:1144.53px;font-size:23px;line-height:23px;color:#2f3337;font-weight:normal;white-space:pre;letter-spacing:-0.414px;"><u>P</u>ost Processing</div>
<div style="position:absolute;left:68px;top:1174px;width:756px;height:182px;box-sizing:border-box;background:#ebecee;border:1px solid #d3d5d7;border-radius:3px;"></div>
<div style="position:absolute;left:71px;top:1182.53px;font-size:23px;line-height:23px;color:#a3a7ab;font-weight:normal;white-space:pre;">Deconv Amo<u>u</u>nt:</div>
<div style="position:absolute;left:281px;top:1178px;width:187px;height:34px;box-sizing:border-box;background:#f0f0f0;border:1px solid #b5b7b9;border-radius:3px;"></div>
<div style="position:absolute;left:446.5px;top:1179px;width:1.0px;height:32px;box-sizing:border-box;background:#b5b7b9;"></div>
<svg style="position:absolute;left:451px;top:1185px;" width="12" height="22" viewBox="0 0 12 22"><path d="M0 8 L6 1.5 L12 8Z" fill="#c6c8ca"/><path d="M0 13.5 L6 20 L12 13.5Z" fill="#d5d7d9"/></svg>
<div style="position:absolute;left:287px;top:1185.03px;font-size:23px;line-height:23px;color:#a3a7ab;font-weight:normal;white-space:pre;">0.00</div>
<div style="position:absolute;left:483.5px;top:1182.53px;font-size:23px;line-height:23px;color:#a3a7ab;font-weight:normal;white-space:pre;">PSF Sigma:</div>
<div style="position:absolute;left:633px;top:1178px;width:187px;height:34px;box-sizing:border-box;background:#f0f0f0;border:1px solid #b5b7b9;border-radius:3px;"></div>
<div style="position:absolute;left:798.5px;top:1179px;width:1.0px;height:32px;box-sizing:border-box;background:#b5b7b9;"></div>
<svg style="position:absolute;left:803px;top:1185px;" width="12" height="22" viewBox="0 0 12 22"><path d="M0 8 L6 1.5 L12 8Z" fill="#c6c8ca"/><path d="M0 13.5 L6 20 L12 13.5Z" fill="#d5d7d9"/></svg>
<div style="position:absolute;left:639px;top:1185.03px;font-size:23px;line-height:23px;color:#a3a7ab;font-weight:normal;white-space:pre;">2.00</div>
<div style="position:absolute;left:71px;top:1216.5px;width:749px;height:1.5px;box-sizing:border-box;background:#6e7276;"></div>
<div style="position:absolute;left:71px;top:1231.03px;font-size:23px;line-height:23px;color:#a3a7ab;font-weight:normal;white-space:pre;">Denoise Amount:</div>
<div style="position:absolute;left:281px;top:1226px;width:187px;height:34px;box-sizing:border-box;background:#f0f0f0;border:1px solid #b5b7b9;border-radius:3px;"></div>
<div style="position:absolute;left:446.5px;top:1227px;width:1.0px;height:32px;box-sizing:border-box;background:#b5b7b9;"></div>
<svg style="position:absolute;left:451px;top:1233px;" width="12" height="22" viewBox="0 0 12 22"><path d="M0 8 L6 1.5 L12 8Z" fill="#c6c8ca"/><path d="M0 13.5 L6 20 L12 13.5Z" fill="#d5d7d9"/></svg>
<div style="position:absolute;left:287px;top:1233.03px;font-size:23px;line-height:23px;color:#a3a7ab;font-weight:normal;white-space:pre;">0.00</div>
<div style="position:absolute;left:71px;top:1265.5px;width:749px;height:1.5px;box-sizing:border-box;background:#6e7276;"></div>
<div style="position:absolute;left:71px;top:1280.03px;font-size:23px;line-height:23px;color:#a3a7ab;font-weight:normal;white-space:pre;">Sharpen Amount:</div>
<div style="position:absolute;left:281px;top:1275px;width:187px;height:34px;box-sizing:border-box;background:#f0f0f0;border:1px solid #b5b7b9;border-radius:3px;"></div>
<div style="position:absolute;left:446.5px;top:1276px;width:1.0px;height:32px;box-sizing:border-box;background:#b5b7b9;"></div>
<svg style="position:absolute;left:451px;top:1282px;" width="12" height="22" viewBox="0 0 12 22"><path d="M0 8 L6 1.5 L12 8Z" fill="#c6c8ca"/><path d="M0 13.5 L6 20 L12 13.5Z" fill="#d5d7d9"/></svg>
<div style="position:absolute;left:287px;top:1282.03px;font-size:23px;line-height:23px;color:#a3a7ab;font-weight:normal;white-space:pre;">0.00</div>
<div style="position:absolute;left:483.5px;top:1280.03px;font-size:23px;line-height:23px;color:#a3a7ab;font-weight:normal;white-space:pre;"><u>K</u>ernel:</div>
<div style="position:absolute;left:633px;top:1275px;width:187px;height:34px;box-sizing:border-box;background:#f0f0f0;border:1px solid #b5b7b9;border-radius:3px;"></div>
<div style="position:absolute;left:798.5px;top:1276px;width:1.0px;height:32px;box-sizing:border-box;background:#b5b7b9;"></div>
<svg style="position:absolute;left:803px;top:1282px;" width="12" height="22" viewBox="0 0 12 22"><path d="M0 8 L6 1.5 L12 8Z" fill="#c6c8ca"/><path d="M0 13.5 L6 20 L12 13.5Z" fill="#d5d7d9"/></svg>
<div style="position:absolute;left:639px;top:1282.03px;font-size:23px;line-height:23px;color:#a3a7ab;font-weight:normal;white-space:pre;">5</div>
<div style="position:absolute;left:71px;top:1321.03px;font-size:23px;line-height:23px;color:#a3a7ab;font-weight:normal;white-space:pre;">Sharpen Sigma:</div>
<div style="position:absolute;left:281px;top:1316px;width:187px;height:34px;box-sizing:border-box;background:#f0f0f0;border:1px solid #b5b7b9;border-radius:3px;"></div>
<div style="position:absolute;left:446.5px;top:1317px;width:1.0px;height:32px;box-sizing:border-box;background:#b5b7b9;"></div>
<svg style="position:absolute;left:451px;top:1323px;" width="12" height="22" viewBox="0 0 12 22"><path d="M0 8 L6 1.5 L12 8Z" fill="#c6c8ca"/><path d="M0 13.5 L6 20 L12 13.5Z" fill="#d5d7d9"/></svg>
<div style="position:absolute;left:287px;top:1323.03px;font-size:23px;line-height:23px;color:#a3a7ab;font-weight:normal;white-space:pre;">1.00</div>
<div style="position:absolute;left:633px;top:1316px;width:187px;height:35px;box-sizing:border-box;background:linear-gradient(#fdfdfd,#f0f1f2);border:1px solid #bfc1c3;border-radius:3px;"></div>
<div style="position:absolute;left:-273.5px;width:2000px;text-align:center;top:1321.53px;font-size:23px;line-height:23px;color:#a3a7ab;font-weight:normal;white-space:pre;">Reprocess</div>
<div style="position:absolute;left:965px;top:185px;width:1307px;height:1330px;box-sizing:border-box;background:#eff0f1;border:1px solid #bcbebf;"></div>
<svg style="position:absolute;left:966px;top:186px;" width="1283" height="1306" viewBox="0 0 1283 1306"><defs><linearGradient id="bgg" x1="0.6" y1="0" x2="0.4" y2="1"><stop offset="0" stop-color="#444444"/><stop offset="0.3" stop-color="#3b3b3b"/><stop offset="1" stop-color="#343434"/></linearGradient><filter id="b4" x="-30%" y="-30%" width="160%" height="160%"><feGaussianBlur stdDeviation="4"/></filter><filter id="b5" x="-30%" y="-30%" width="160%" height="160%"><feGaussianBlur stdDeviation="5.5"/></filter><filter id="b10" x="-30%" y="-30%" width="160%" height="160%"><feGaussianBlur stdDeviation="10"/></filter><filter id="b25" x="-50%" y="-50%" width="200%" height="200%"><feGaussianBlur stdDeviation="25"/></filter><filter id="mottle" x="0" y="0" width="100%" height="100%" filterUnits="userSpaceOnUse"><feTurbulence type="turbulence" baseFrequency="0.03" numOctaves="4" seed="9" result="n"/><feColorMatrix in="n" type="matrix" values="0 0 0 0 0  0 0 0 0 0  0 0 0 0 0  -1.6 0 0 0 1.15" result="na"/><feComposite in="SourceGraphic" in2="na" operator="in" result="m"/><feGaussianBlur in="m" stdDeviation="0.9"/></filter><filter id="mottle2" x="0" y="0" width="100%" height="100%" filterUnits="userSpaceOnUse"><feTurbulence type="turbulence" baseFrequency="0.06" numOctaves="3" seed="4" result="n"/><feColorMatrix in="n" type="matrix" values="0 0 0 0 0  0 0 0 0 0  0 0 0 0 0  -2.4 0 0 0 1.42" result="na"/><feComposite in="SourceGraphic" in2="na" operator="in" result="m"/><feGaussianBlur in="m" stdDeviation="0.8"/></filter><filter id="stars" x="0" y="0" width="100%" height="100%" filterUnits="userSpaceOnUse"><feTurbulence type="fractalNoise" baseFrequency="0.33" numOctaves="1" seed="23" result="n"/><feColorMatrix in="n" type="matrix" values="0 0 0 0 1  0 0 0 0 1  0 0 0 0 1  14 0 0 0 -9.6"/><feGaussianBlur stdDeviation="0.9"/></filter><filter id="grain" x="0" y="0" width="100%" height="100%" filterUnits="userSpaceOnUse"><feTurbulence type="fractalNoise" baseFrequency="0.6" numOctaves="2" seed="5" result="n"/><feColorMatrix in="n" type="matrix" values="0 0 0 0 1  0 0 0 0 1  0 0 0 0 1  0.9 0 0 0 -0.3"/></filter><filter id="sb1" x="0" y="0" width="100%" height="100%" filterUnits="userSpaceOnUse"><feGaussianBlur stdDeviation="0.7"/></filter><filter id="sb2" x="0" y="0" width="100%" height="100%" filterUnits="userSpaceOnUse"><feGaussianBlur stdDeviation="1.0"/></filter><radialGradient id="star"><stop offset="0" stop-color="#fff"/><stop offset="0.4" stop-color="#f0f0f0"/><stop offset="1" stop-color="#fff" stop-opacity="0"/></radialGradient></defs><rect width="1283" height="1306" fill="url(#bgg)"/><rect width="1283" height="1306" fill="#000" opacity="0.0"/><g filter="url(#mottle)"><path d="M509.0 614.0 C534.0 514.0 604.0 454.0 684.0 419.0 C754.0 394.0 804.0 374.0 844.0 394.0 C894.0 434.0 929.0 504.0 924.0 584.0 C914.0 654.0 864.0 714.0 794.0 754.0 C734.0 804.0 714.0 894.0 654.0 949.0 C594.0 974.0 524.0 944.0 484.0 894.0 C454.0 834.0 484.0 694.0 509.0 614.0 Z" fill="#747474" opacity="0.36" filter="url(#b25)"/><ellipse cx="609" cy="604" rx="35" ry="30" fill="#a0a0a0" opacity="0.6" filter="url(#b10)"/><path d="M529.0 544.0 C549.0 504.0 594.0 499.0 609.0 534.0 C599.0 574.0 564.0 604.0 539.0 619.0Z" fill="#bcbcbc" opacity="0.8" filter="url(#b10)"/><path d="M494.0 536.0 C514.0 544.0 534.0 559.0 554.0 574.0" fill="none" stroke="#909090" stroke-width="10" opacity="0.5" filter="url(#b4)"/><path d="M579.0 494.0 C624.0 454.0 684.0 426.0 744.0 414.0 C784.0 404.0 809.0 386.0 849.0 404.0 C894.0 439.0 919.0 504.0 922.0 574.0 C919.0 614.0 904.0 644.0 889.0 664.0" fill="none" stroke="#9a9a9a" stroke-width="34" opacity="0.6" filter="url(#b10)"/><path d="M769.0 412.0 C794.0 394.0 809.0 382.0 824.0 386.0 C844.0 394.0 859.0 414.0 872.0 434.0" fill="none" stroke="#c8c8c8" stroke-width="9" opacity="0.8" filter="url(#b4)"/><path d="M644.0 659.0 C694.0 674.0 754.0 694.0 814.0 719.0" fill="none" stroke="#a8a8a8" stroke-width="12" opacity="0.55" filter="url(#b4)"/><path d="M794.0 464.0 C764.0 484.0 754.0 504.0 734.0 514.0" fill="none" stroke="#a0a0a0" stroke-width="6" opacity="0.6" filter="url(#b4)"/><path d="M579.0 554.0 C604.0 584.0 624.0 614.0 634.0 654.0 M594.0 604.0 C574.0 664.0 564.0 714.0 574.0 774.0" fill="none" stroke="#9a9a9a" stroke-width="10" opacity="0.5" filter="url(#b4)"/></g><g filter="url(#mottle2)"><path d="M539.0 604.0 C524.0 634.0 509.0 684.0 500.0 724.0 C492.0 774.0 484.0 814.0 473.0 846.0 C474.0 879.0 494.0 919.0 524.0 939.0 C554.0 959.0 589.0 970.0 624.0 966.0 C649.0 959.0 666.0 950.0 676.0 940.0 C634.0 944.0 594.0 939.0 565.0 917.0 C534.0 889.0 524.0 844.0 528.0 799.0 C534.0 754.0 542.0 694.0 562.0 619.0 Z" fill="#8a8a8a" opacity="0.45" filter="url(#b10)" transform="translate(8 -3)"/><path d="M539.0 604.0 C524.0 634.0 509.0 684.0 500.0 724.0 C492.0 774.0 484.0 814.0 473.0 846.0 C474.0 879.0 494.0 919.0 524.0 939.0 C554.0 959.0 589.0 970.0 624.0 966.0 C649.0 959.0 666.0 950.0 676.0 940.0 C634.0 944.0 594.0 939.0 565.0 917.0 C534.0 889.0 524.0 844.0 528.0 799.0 C534.0 754.0 542.0 694.0 562.0 619.0 Z" fill="#c0c0c0" opacity="0.82" filter="url(#b5)"/></g><rect width="1283" height="1306" filter="url(#grain)" opacity="0.07"/><rect width="1283" height="1306" filter="url(#stars)" opacity="0.25"/><path d="M603 952h0M390 1159h0M526 937h0M340 324h0M1043 653h0M534 952h0M1236 408h0M903 681h0M938 1306h0M265 984h0M601 927h0M1119 198h0M273 541h0M75 460h0M534 167h0M954 997h0M501 454h0M258 560h0M406 283h0M1113 303h0M52 298h0M25 1131h0M1083 420h0M1232 1052h0M540 151h0M1092 794h0M296 1300h0M469 269h0M633 1093h0M181 509h0M433 1228h0M1282 610h0M218 910h0M1105 437h0M265 898h0M126 1102h0M6 201h0M903 461h0M104 1050h0M307 605h0M338 686h0M559 1270h0M258 97h0M388 182h0M849 330h0M129 290h0M251 511h0M661 295h0M455 919h0M1026 758h0M1196 713h0M1201 942h0M813 159h0M72 168h0M1064 1185h0M789 119h0M647 312h0M749 957h0M208 168h0M134 1233h0M721 1299h0M810 780h0M719 713h0M404 165h0M37 85h0M815 818h0M795 278h0M267 252h0M239 413h0M940 830h0M1071 1053h0M279 768h0M576 549h0M902 1153h0M206 523h0M966 469h0M881 160h0M866 1010h0M965 550h0M1253 284h0M596 651h0M1034 566h0M14 447h0M1249 1226h0M328 959h0M289 1266h0M1060 1106h0M87 1154h0M224 1126h0M394 1197h0M635 477h0M598 569h0M631 430h0M48 163h0M466 833h0M232 922h0M70 572h0M34 1191h0M1206 305h0M407 1136h0M176 746h0M139 139h0M767 914h0M557 212h0M296 5h0M160 497h0M735 585h0M1012 1084h0M1187 723h0M982 1174h0M355 469h0M818 531h0M976 419h0M670 315h0M1000 471h0M540 613h0M396 1254h0M879 257h0M828 75h0M488 852h0M337 679h0M837 376h0M690 1230h0M980 662h0M595 371h0M317 680h0M948 1246h0M1236 1190h0M616 480h0M40 844h0M892 988h0M1159 137h0M786 253h0M984 1249h0M973 336h0M1034 1012h0M861 682h0M1208 1046h0M215 934h0M1060 95h0M159 777h0M167 506h0M1256 1086h0M126 987h0M301 389h0M1151 1068h0M1193 506h0M138 175h0M529 824h0M428 1076h0M303 789h0M490 746h0M219 1044h0M330 1149h0M704 919h0M950 254h0M1043 883h0M298 37h0M791 148h0M544 552h0M610 365h0M461 457h0M619 886h0M575 724h0M40 1192h0M240 852h0M636 475h0M624 1227h0M83 964h0M1252 354h0M234 612h0M797 189h0M148 69h0M970 977h0M909 112h0M616 1234h0M676 883h0M1084 877h0M850 858h0M814 640h0M743 886h0M863 707h0M914 407h0M1281 331h0M50 815h0M1017 345h0M443 74h0M20 416h0M404 249h0M364 596h0M64 213h0M1008 836h0M505 542h0M873 180h0M17 474h0M532 327h0M439 799h0M420 962h0M764 1055h0M531 821h0M567 171h0M149 1300h0M1201 537h0M1281 651h0M933 1208h0M1088 1266h0M1078 838h0M1048 1250h0M1152 996h0M474 1132h0M1090 96h0M1141 635h0M761 1124h0M1000 1234h0M1176 842h0M929 493h0M822 1178h0M24 1122h0M1156 936h0M1148 218h0M195 24h0M20 84h0M429 1275h0M306 676h0M1000 207h0M1069 59h0M1176 1069h0M461 686h0M717 146h0M324 22h0M1041 666h0M690 584h0M966 1023h0M868 190h0M1113 352h0M4 1188h0M311 576h0M186 442h0M757 164h0M103 946h0M294 990h0M1150 215h0M599 1150h0M254 618h0M524 814h0M101 856h0M973 984h0M670 1077h0M1141 828h0M906 320h0M952 207h0M26 1256h0M931 364h0M872 1091h0M876 524h0M873 507h0M571 749h0M152 356h0M336 196h0M151 872h0M104 647h0M745 168h0M180 604h0M779 524h0M925 739h0M526 575h0M1153 425h0M736 1101h0M672 1098h0M1252 803h0M1221 543h0M654 972h0M470 403h0M1258 903h0M1150 361h0M282 845h0M740 1239h0M1212 1038h0M443 1186h0M111 859h0M1131 443h0M21 809h0M961 1255h0M826 575h0M659 113h0M620 732h0M384 659h0M439 123h0M242 708h0M809 47h0M876 883h0M1092 843h0M210 114h0M511 1182h0M971 422h0M1003 950h0M845 449h0M1240 578h0M979 591h0M660 990h0M49 376h0M880 1106h0M1067 146h0M180 275h0M104 1028h0M1094 138h0M20 138h0M1280 307h0M1067 780h0M660 255h0M258 402h0M1131 464h0M982 370h0M99 1051h0M662 910h0M573 418h0M1226 265h0M583 126h0M956 868h0M1107 881h0M1029 813h0M1191 692h0M317 223h0M454 285h0M494 935h0M236 1096h0M33 1282h0M895 894h0M320 448h0M862 1177h0M64 845h0M351 978h0M573 1041h0M279 1086h0M737 114h0M309 335h0M619 1132h0M223 685h0M70 1043h0M579 539h0M560 86h0M221 1046h0M859 738h0M982 1296h0M1051 988h0M917 731h0M1167 1179h0M638 303h0M488 242h0M483 185h0M493 243h0M1114 915h0M463 1218h0M1269 109h0M304 1238h0M933 181h0M923 630h0M558 470h0M66 368h0M630 1278h0M1252 1140h0M666 803h0M648 241h0M1115 1169h0M951 103h0M32 641h0M66 781h0M401 380h0M487 801h0M76 1204h0M1276 705h0M316 960h0M523 78h0M441 114h0M42 337h0M803 865h0M1031 751h0M836 661h0M1127 1204h0M775 1098h0M1144 625h0M595 501h0M663 251h0M488 655h0M1264 741h0M259 279h0M379 1209h0M505 33h0M571 966h0M1151 791h0M1074 76h0M1280 1229h0M1140 427h0M166 288h0M39 394h0M1239 1255h0M789 355h0M1193 585h0M1105 293h0M957 49h0M1084 140h0M771 80h0M10 1301h0M310 337h0M769 1037h0M330 1054h0M577 1253h0M765 781h0M1059 770h0M641 574h0M996 1264h0M1123 1193h0M505 101h0M1251 728h0M1248 1098h0M377 1039h0M1255 946h0M1162 1220h0M400 616h0M1250 461h0M545 125h0M983 605h0M521 117h0M1255 1001h0M479 1028h0M14 112h0M44 932h0M844 442h0M1037 851h0M132 1065h0M1182 958h0M137 491h0M739 253h0M356 1116h0M20 560h0M1145 132h0M1128 571h0M407 1025h0M307 1162h0M873 131h0M114 824h0M605 149h0M30 244h0M844 1158h0M223 110h0M54 1166h0M1183 501h0M1089 142h0M962 516h0M451 550h0M477 289h0M829 860h0M192 1042h0M848 185h0M1173 1270h0M663 1304h0M594 931h0M1177 807h0M887 997h0M323 872h0M101 510h0M1194 1231h0M509 104h0M1202 601h0M55 529h0M1154 502h0M1232 190h0M388 128h0M578 57h0M931 725h0M919 447h0M575 193h0M462 1076h0M1208 509h0M579 870h0M1166 158h0M959 283h0M890 1152h0M452 872h0M1080 484h0M275 978h0M237 617h0M808 471h0M479 821h0M909 608h0M1274 462h0M320 412h0M49 644h0M1222 600h0M25 1212h0M1005 1300h0M14 479h0M236 75h0M443 910h0M1165 228h0M411 835h0M904 1033h0M204 615h0M1112 40h0M781 117h0M466 440h0M1073 977h0M155 477h0M193 1252h0M766 59h0M648 784h0M101 873h0M433 727h0M852 285h0M854 136h0M239 162h0M541 867h0M397 1173h0M137 1222h0M307 851h0M876 906h0M991 824h0M814 112h0M147 879h0M377 124h0M71 650h0M612 666h0M1110 1016h0M309 202h0M85 396h0M852 853h0M966 792h0M747 112h0M24 1135h0M261 103h0M375 667h0M596 661h0M963 1033h0M860 1260h0M822 57h0M504 612h0M339 529h0M243 1253h0M555 789h0M49 1130h0M239 822h0M1023 30h0M1048 697h0M902 902h0M163 562h0M621 733h0M615 195h0M148 1155h0M1048 272h0M148 1021h0M540 489h0M506 1177h0M17 166h0M502 994h0M445 626h0M1001 323h0M979 1012h0M248 1013h0M847 573h0M1047 193h0M134 304h0M977 667h0M237 498h0M891 405h0M840 416h0M89 443h0M1122 619h0M537 273h0M660 720h0M473 858h0M816 1020h0M96 754h0M811 606h0M1175 1094h0M715 979h0M132 148h0M839 1136h0M133 193h0M531 1236h0M305 413h0M1110 430h0M243 1276h0M187 1115h0M1234 878h0M1242 307h0M327 823h0M1023 351h0M386 69h0M703 274h0M56 229h0M208 24h0M1267 540h0M1079 785h0M951 770h0M7 1033h0M1168 353h0M453 479h0M822 740h0M691 1247h0M863 574h0M1155 149h0M785 719h0M1107 1039h0M466 603h0M827 711h0M1247 1112h0M570 1069h0M915 1290h0M129 189h0M973 698h0M955 648h0M1156 1260h0M1275 510h0M1191 221h0M475 10h0M791 634h0M193 219h0M1230 283h0M1060 912h0M14 1196h0M609 358h0M957 108h0M908 494h0M1050 705h0M1135 1153h0M123 662h0M450 183h0M748 774h0M697 744h0M816 275h0M61 594h0M142 1134h0M1271 1192h0M882 707h0M1100 676h0M206 358h0M552 372h0M459 1033h0M11 101h0M851 928h0M239 736h0M940 988h0M537 223h0M1273 557h0M836 173h0M1262 612h0M1239 1239h0M247 1046h0M378 694h0M914 1286h0M941 447h0M1146 571h0M612 1000h0M151 1029h0M1241 376h0M936 781h0M911 628h0M869 1009h0M336 429h0M886 602h0M484 137h0M877 788h0M550 943h0M1188 135h0M1014 226h0M486 441h0M275 880h0M33 762h0M298 328h0M578 67h0M1271 537h0M50 607h0M1244 910h0M970 253h0M1166 800h0M95 762h0M594 859h0M206 362h0M895 894h0M553 90h0M552 419h0M364 195h0M365 724h0M516 405h0M1095 560h0M1186 133h0M1109 627h0M661 341h0M1128 944h0M371 139h0M779 679h0M782 173h0M1048 715h0M300 1079h0M1001 969h0M1018 651h0M1110 635h0M1148 1276h0M979 1132h0M426 130h0M671 861h0M999 886h0M465 198h0M272 45h0M615 6h0M1176 459h0M306 678h0M429 839h0M761 279h0M839 1086h0M1136 1287h0M808 139h0M702 699h0M792 964h0M482 1166h0M1127 513h0M620 202h0M1070 867h0M192 914h0M418 323h0M659 462h0M1178 454h0M1082 931h0M1130 332h0M627 1289h0M908 595h0M58 868h0M699 378h0M804 945h0M823 366h0M263 967h0M12 83h0M333 922h0M1030 1191h0M518 179h0M887 645h0M974 732h0M822 465h0M87 703h0M76 83h0M761 455h0M97 998h0M81 738h0M503 866h0M324 191h0M315 1018h0M691 425h0M1049 1204h0M555 898h0M996 107h0M330 1134h0M1138 599h0M240 156h0M507 97h0M755 748h0M346 217h0M1020 516h0M51 603h0M127 1139h0M878 820h0M529 908h0M1196 910h0M361 270h0M916 1240h0M694 499h0M338 581h0M1027 1052h0M1008 610h0M547 377h0M1276 1237h0M195 528h0M752 274h0M1168 810h0M749 317h0M282 984h0M104 957h0M945 533h0M1278 863h0M1172 1027h0M1226 575h0M734 1070h0M289 1252h0M563 1084h0M1101 845h0M417 1288h0M1101 699h0M87 1084h0M1116 1023h0M407 106h0M614 97h0M454 519h0M485 1245h0M617 1291h0M436 154h0M1271 187h0M810 235h0M491 462h0M1166 461h0M1054 787h0M568 669h0M214 490h0M787 787h0M6 76h0M405 1306h0M1008 1274h0M626 773h0M485 807h0M1177 307h0M846 705h0M943 1208h0M764 880h0M205 1132h0M84 367h0M867 852h0M863 718h0M909 189h0M371 486h0M76 944h0M998 1080h0M132 960h0M328 365h0M997 862h0M1064 549h0M129 778h0M316 814h0M369 351h0M1128 649h0M939 610h0M450 1270h0M1135 433h0M58 842h0M282 507h0M1165 1207h0M681 1087h0M885 664h0M258 1287h0M821 936h0M722 1163h0M596 1184h0M772 218h0M908 683h0M777 602h0M46 855h0M9 276h0M301 736h0M1081 897h0M475 368h0M95 1248h0M836 811h0M431 201h0M185 1072h0M366 1017h0M309 969h0M981 417h0M59 471h0M1131 1049h0M436 1227h0M601 984h0M422 594h0M997 119h0M1119 283h0M631 323h0M918 1159h0M265 278h0M979 207h0M1077 596h0M933 111h0M571 203h0M748 873h0M836 525h0M334 1071h0M506 1111h0M235 539h0M419 1182h0M1187 515h0M940 485h0M1018 517h0M869 687h0M1056 240h0M44 1077h0M265 14h0M25 478h0M773 1074h0M948 146h0M780 869h0M983 317h0M290 291h0M132 1203h0M111 778h0M943 1014h0M231 315h0M169 999h0M233 237h0M793 950h0M362 144h0M133 646h0M205 18h0M38 271h0M269 66h0M292 247h0M175 682h0M878 491h0M1013 1140h0M729 282h0M687 375h0M852 499h0M406 730h0M1042 570h0M520 116h0M835 1303h0M42 664h0M1100 811h0M1101 1303h0M649 1076h0M1250 973h0M1256 287h0M1220 708h0M56 462h0M231 375h0M595 478h0M830 251h0M693 1106h0M457 70h0M479 1298h0M461 847h0M889 1187h0M1066 1051h0M823 33h0M408 1046h0M86 354h0M435 903h0M981 1123h0M1241 460h0M1135 127h0M183 822h0M697 574h0M373 133h0M154 895h0M683 322h0M688 190h0M959 715h0M808 65h0M1098 1247h0M1089 1265h0M774 123h0M831 516h0M1204 335h0M1122 1200h0M1247 1234h0M449 233h0M890 54h0M300 126h0M1238 476h0M541 317h0M905 447h0M685 15h0M292 311h0M126 731h0M632 1015h0M753 53h0M176 1267h0M131 1103h0M848 1091h0M1087 171h0M1228 537h0M1272 937h0M129 123h0M446 830h0M1050 97h0M129 348h0M856 1210h0M543 369h0M1098 463h0M673 834h0M345 1212h0M944 568h0M412 93h0M271 660h0M1103 293h0M653 1207h0M399 1149h0M284 256h0M981 826h0M312 1235h0M173 1164h0M1210 195h0M180 488h0M1269 1142h0M933 567h0M526 636h0M485 682h0M326 35h0M395 987h0M487 907h0M916 835h0M644 452h0M1074 770h0M652 911h0M417 1179h0M706 975h0M196 660h0M202 187h0M903 447h0M1142 308h0M362 466h0M78 83h0M782 731h0M633 63h0M826 469h0M419 1301h0M686 294h0M1107 604h0M1017 635h0M898 1202h0M301 654h0M370 1028h0M98 1244h0M87 778h0M897 654h0M225 191h0M64 1230h0M1204 1210h0M134 1174h0M603 534h0M813 960h0M912 58h0M740 1273h0M816 868h0M33 982h0M243 441h0M665 10h0M741 875h0M411 1091h0M734 658h0M706 29h0M609 244h0M715 828h0M1176 970h0M903 151h0M868 1265h0M764 90h0M1081 860h0M513 313h0M749 680h0M122 46h0M992 544h0M1144 203h0M238 154h0M1148 9h0M208 722h0M173 464h0M112 153h0M519 978h0M179 1014h0M421 393h0M1131 1096h0M247 180h0M827 1161h0M1200 158h0M360 1174h0M1062 589h0M131 441h0M1089 721h0M524 1028h0M151 384h0M878 702h0M913 991h0M253 525h0M992 960h0M907 99h0M1100 1072h0M818 202h0M614 74h0M439 140h0M1162 1232h0M668 6h0M178 1087h0M764 810h0M1122 79h0M94 59h0M1002 842h0M1188 334h0M31 1271h0M277 448h0M1095 96h0M218 1192h0M231 1138h0M1164 546h0M514 666h0M303 188h0M1197 348h0M201 765h0M436 242h0M705 171h0M436 854h0M280 66h0M1021 1065h0M710 1270h0M841 1140h0M605 1278h0M329 1156h0M1196 1200h0M293 543h0M952 891h0M1051 962h0M23 826h0M1078 66h0M811 681h0M1249 1065h0M234 664h0M492 621h0M431 970h0M262 1273h0M824 945h0M1036 1030h0M1235 527h0M700 1019h0M391 106h0M935 120h0M5 1133h0M460 124h0M1238 1284h0M135 629h0M478 765h0M1249 1245h0M585 208h0M830 71h0M276 921h0M1173 256h0M916 315h0M851 1282h0M408 410h0M934 162h0M709 1239h0M415 443h0M1172 931h0M88 471h0M1267 208h0M308 166h0M388 25h0M824 1112h0M359 1047h0M735 985h0M791 770h0M516 443h0M788 1091h0M1150 1147h0M925 830h0M1106 848h0M1214 174h0M1146 280h0M1041 1079h0M500 580h0M83 870h0M1244 211h0M1231 1037h0M1162 546h0M96 546h0M1128 890h0M420 991h0M920 460h0M172 282h0M325 17h0M1029 1252h0M612 40h0M703 643h0M251 759h0M1077 638h0M135 435h0M83 1061h0M624 582h0M645 1085h0M1282 990h0M67 508h0M221 1255h0M430 659h0M29 715h0M1094 876h0M1218 828h0M697 68h0M385 570h0M157 234h0M62 983h0M1005 172h0M692 916h0M1038 248h0M407 506h0M1004 1159h0M1112 225h0M1073 843h0M289 516h0M664 101h0M731 791h0M508 419h0M696 329h0M297 1289h0M1055 139h0M509 550h0M1245 605h0M579 1302h0M253 1020h0M111 804h0M1124 780h0M644 263h0M390 1100h0M374 652h0M244 810h0M149 907h0M627 750h0M1240 955h0M463 741h0M756 1254h0M39 813h0M311 225h0M325 1303h0M996 1013h0M208 911h0M529 1131h0M1116 187h0M360 796h0M25 1203h0M262 1198h0M872 1099h0M1149 126h0M861 477h0M799 1276h0M525 256h0M1086 363h0M1235 632h0M831 1056h0M881 1296h0M702 1214h0M1103 876h0M932 657h0M679 97h0M86 1013h0M251 258h0M254 851h0M960 280h0M46 586h0M818 26h0M293 150h0M527 953h0M627 1044h0M1150 970h0M397 1298h0M1033 867h0M265 157h0M468 366h0M897 706h0M52 143h0M1072 1029h0M1075 817h0M605 108h0M681 872h0M581 249h0M704 538h0M243 1293h0M1105 623h0M419 193h0M494 485h0M881 434h0M1135 676h0M636 162h0M946 659h0M496 552h0M1000 364h0M769 82h0M1036 724h0M304 565h0M583 1125h0M64 672h0M1230 1275h0M646 216h0M1043 140h0M732 907h0M306 929h0M1223 971h0M304 1108h0M635 1134h0M636 811h0M1052 487h0M249 424h0M829 45h0M1269 802h0M238 184h0M860 511h0M975 325h0M1252 927h0M509 720h0M707 682h0M832 961h0M853 334h0M649 11h0M229 378h0M519 1045h0M385 1189h0M728 1273h0M76 1037h0M116 624h0M925 665h0M662 664h0M225 1163h0M678 715h0M1033 884h0M984 617h0M1192 1147h0M713 544h0M418 673h0M1156 60h0M670 1006h0M1026 445h0M173 144h0M538 1153h0M885 1146h0M836 464h0M950 600h0M148 1292h0M874 201h0M567 448h0M541 1142h0M255 1205h0M811 1126h0M245 740h0M798 668h0M339 622h0M861 1176h0M203 257h0M846 1181h0M217 711h0M490 545h0M895 604h0M82 1218h0M664 200h0M611 285h0M839 632h0M850 598h0M399 980h0M123 1041h0M980 650h0M46 246h0M25 514h0M989 51h0M868 624h0M492 793h0M116 628h0M409 446h0M248 462h0M157 1093h0M1254 854h0M71 913h0M384 124h0M1160 85h0M522 20h0M1035 1276h0M381 76h0M1004 706h0M619 830h0M1102 943h0M991 895h0M709 1302h0M870 1254h0M131 1011h0M907 21h0M936 440h0M132 691h0M880 532h0M698 1253h0M978 391h0M350 735h0M782 1147h0M29 106h0M551 420h0M350 310h0M102 770h0M575 1055h0M783 102h0M640 114h0M20 893h0M773 1247h0M507 802h0M806 12h0M1175 903h0M164 454h0M307 510h0M1255 293h0M738 1022h0M587 161h0M699 347h0M708 575h0M1042 931h0M1278 748h0M1188 785h0M514 686h0M544 631h0M335 192h0M194 362h0M1172 272h0M858 335h0M783 154h0M1079 1065h0M1094 167h0M400 877h0M390 425h0M161 940h0M1246 657h0M365 149h0M1222 578h0M516 382h0M416 847h0M813 977h0M570 1289h0M516 323h0M542 940h0M896 1126h0M518 722h0M754 81h0M1188 1152h0M1084 593h0M1063 780h0M900 1274h0M552 401h0M189 559h0M571 566h0M552 1240h0M430 1242h0M487 475h0M677 215h0M1159 507h0M652 623h0M189 846h0M170 861h0M109 1241h0M325 158h0M181 949h0M1044 168h0M285 199h0M1105 773h0M454 334h0M314 375h0M97 424h0M829 243h0M158 239h0M210 378h0M710 530h0M756 1276h0M1003 737h0M498 1142h0M292 762h0M1236 143h0M1143 792h0M128 648h0M1215 1069h0M453 641h0M670 153h0M1032 884h0M220 1121h0M1138 1010h0M293 509h0M514 1031h0M1176 113h0M693 871h0M487 619h0M1180 976h0M1065 1254h0M964 99h0M1261 654h0M125 537h0M1061 1187h0M800 98h0M213 1171h0M854 1066h0M766 1003h0M869 920h0M410 607h0M611 769h0M1046 168h0M1000 213h0M358 579h0M233 929h0M257 193h0M742 1085h0M766 669h0M637 1066h0M299 110h0M284 156h0M731 222h0M421 358h0M1233 202h0M959 922h0M629 901h0M1268 873h0M266 519h0M830 375h0M180 919h0M665 1216h0M749 733h0M875 145h0M1196 89h0M398 336h0M392 910h0M1131 205h0M935 199h0M1105 513h0M178 724h0M183 590h0M888 1212h0M336 75h0M1186 261h0M794 898h0M804 751h0M551 685h0M1021 841h0M219 909h0M587 20h0M825 409h0M347 647h0M395 982h0M697 491h0M284 1269h0M323 405h0M1093 720h0M427 821h0M723 1103h0M813 135h0M87 493h0M563 1232h0M686 45h0M55 774h0M231 1008h0M1190 974h0M246 1163h0M551 1154h0M619 641h0M1068 846h0M104 522h0M484 925h0M615 486h0M1093 1259h0M836 1162h0M124 836h0M288 369h0M413 326h0M1242 592h0M727 1167h0M459 548h0M1005 234h0M807 622h0M400 290h0M977 850h0M1112 880h0M211 630h0M1194 1198h0M723 1032h0M1100 989h0M676 48h0M274 26h0M77 60h0M692 564h0M147 875h0M463 977h0M222 1127h0M594 763h0M1031 654h0M479 759h0M899 543h0M626 622h0M557 1204h0M759 224h0M205 1221h0M784 102h0M528 477h0M234 750h0M456 1148h0M1225 610h0M1092 958h0M1014 203h0M1242 380h0M564 1255h0M1126 140h0M1063 456h0M1220 681h0M1059 827h0M196 802h0M736 829h0M326 933h0M785 519h0M904 512h0M770 894h0M1074 370h0M589 610h0M1143 813h0M808 313h0M715 446h0M29 681h0M791 1210h0M920 852h0M1139 1296h0M892 458h0M1226 163h0" stroke="#858585" stroke-width="2.8" stroke-linecap="round" filter="url(#sb1)"/><path d="M894 353h0M844 75h0M496 821h0M939 1189h0M995 174h0M1109 450h0M257 448h0M418 134h0M755 539h0M408 13h0M597 1024h0M829 95h0M809 359h0M202 99h0M269 1182h0M568 555h0M461 808h0M969 1057h0M106 829h0M455 148h0M93 211h0M566 68h0M638 142h0M77 64h0M912 1255h0M800 1285h0M674 745h0M299 1028h0M1281 10h0M423 466h0M360 1287h0M1035 543h0M669 1247h0M168 353h0M25 500h0M531 807h0M612 120h0M874 716h0M890 100h0M933 1230h0M73 1040h0M738 1087h0M520 446h0M759 823h0M416 689h0M555 1099h0M116 88h0M624 924h0M781 288h0M981 735h0M61 1027h0M937 528h0M226 121h0M76 213h0M529 50h0M12 211h0M1234 770h0M179 422h0M860 1135h0M1252 379h0M1136 861h0M57 1261h0M1095 585h0M923 451h0M141 265h0M1136 222h0M796 115h0M1005 326h0M100 430h0M49 1014h0M881 1155h0M1138 1099h0M1086 1247h0M159 1009h0M178 1294h0M805 857h0M939 703h0M454 1029h0M209 1033h0M703 351h0M1270 146h0M250 331h0M146 1164h0M91 76h0M1234 761h0M1157 322h0M121 344h0M1258 602h0M907 7h0M85 840h0M154 352h0M1281 1104h0M146 101h0M914 1108h0M404 351h0M274 1279h0M546 1005h0M549 438h0M974 662h0M847 1269h0M829 712h0M921 1074h0M642 513h0M346 1208h0M341 163h0M385 524h0M324 124h0M1041 902h0M738 1292h0M878 702h0M520 854h0M1200 112h0M1272 121h0M1045 330h0M840 289h0M602 761h0M725 465h0M721 65h0M71 384h0M349 1168h0M492 1262h0M332 913h0M158 419h0M327 72h0M1177 973h0M1219 1135h0M916 418h0M1033 526h0M723 1146h0M621 25h0M498 818h0M595 680h0M162 1011h0M37 161h0M1087 1290h0M208 941h0M783 533h0M572 654h0M50 549h0M345 854h0M141 527h0M13 151h0M400 546h0M705 245h0M404 774h0M1192 861h0M775 1013h0M37 469h0M1012 572h0M378 1119h0M552 161h0M329 865h0M350 1123h0M415 493h0M1085 1000h0M552 808h0M600 232h0M476 1113h0M1204 698h0M1075 942h0M110 1203h0M1153 529h0M534 118h0M1130 466h0M469 398h0M833 576h0M822 467h0M495 821h0M149 268h0M1145 603h0M63 1032h0M759 611h0M237 317h0M935 369h0M1215 1175h0M1024 959h0M812 1089h0M591 331h0M970 313h0M217 631h0M795 1167h0M354 388h0M24 1126h0M558 456h0M148 264h0M859 527h0M477 793h0M426 1073h0M585 296h0M598 387h0M981 940h0M196 967h0M443 1119h0M736 285h0M1040 561h0M799 1171h0M854 1124h0M123 1197h0M575 1269h0M428 307h0M836 1137h0M303 755h0M43 964h0M176 530h0M773 198h0M463 374h0M107 1251h0M92 492h0M144 122h0M197 929h0M1044 26h0M716 392h0M492 1122h0M781 433h0M484 980h0M746 1212h0M898 300h0M907 508h0M853 1264h0M904 794h0M370 443h0M580 532h0M1050 909h0M102 773h0M1140 852h0M739 1082h0M1187 794h0M971 1034h0M1 1175h0M1093 1071h0M237 845h0M290 75h0M1004 462h0M1000 1126h0M922 1012h0M1276 292h0M615 809h0M1252 647h0M1110 907h0M345 1043h0M1047 633h0M501 694h0M846 1086h0M1102 140h0M1212 1072h0M1020 1170h0M628 326h0M270 839h0M961 103h0M1097 599h0M1193 436h0M227 332h0M254 838h0M653 730h0M1113 981h0M720 1133h0M850 991h0M1069 1087h0M152 368h0M329 29h0M956 433h0M27 1077h0M388 1097h0M1239 462h0M150 432h0M295 171h0M704 820h0M606 622h0M987 255h0M101 1060h0M732 77h0M463 217h0M695 308h0M852 716h0M1240 476h0M630 160h0M640 1144h0M173 189h0M776 54h0M579 773h0M385 373h0M526 1098h0M1053 789h0M652 454h0M658 992h0M223 688h0M118 438h0M764 86h0M25 1244h0M328 1237h0M108 147h0M487 1252h0M492 1064h0M306 96h0M924 485h0M1198 828h0M117 550h0M787 228h0M934 596h0M256 954h0M457 1100h0M312 649h0M915 103h0M679 381h0M215 1223h0M1185 1140h0M483 470h0M878 1264h0M1043 855h0M1150 891h0M496 763h0M1184 197h0M1148 1147h0M514 1096h0M732 531h0M980 518h0M230 995h0M245 124h0M1037 734h0M690 1173h0M1273 585h0M988 538h0M929 1256h0M596 479h0M850 766h0M1093 76h0M390 1132h0M228 21h0M543 1021h0M235 1050h0M780 916h0M1240 284h0M1154 774h0M310 1126h0M548 291h0M479 464h0M339 591h0M428 213h0M69 1232h0M898 245h0M633 427h0M93 1052h0M1068 914h0M141 307h0M91 924h0M130 940h0M661 1160h0M358 95h0M244 672h0M714 284h0M606 1181h0M16 176h0M1181 735h0M535 578h0M446 802h0M23 657h0M588 30h0M1225 516h0M877 923h0M45 939h0M528 236h0M486 716h0M25 1076h0M555 68h0M1035 1117h0M0 237h0M989 1231h0M800 920h0M8 949h0M123 747h0M435 1024h0M679 271h0M1121 989h0M29 1139h0M647 1244h0M782 958h0M644 40h0M789 615h0M301 323h0M807 931h0M136 120h0M1171 316h0M1189 1212h0M340 722h0M437 680h0M795 400h0M664 418h0M525 11h0M95 265h0M1086 766h0M124 94h0M653 1220h0M967 200h0M951 155h0M1088 49h0M276 307h0M458 1248h0M466 859h0M118 29h0M1031 479h0M968 157h0M1281 475h0M1200 58h0M1034 334h0M680 494h0M851 977h0M1063 863h0M1129 452h0M359 720h0M1202 932h0M1187 860h0M670 1179h0M590 1141h0M415 1108h0M318 614h0M480 267h0M1123 1200h0M1013 828h0M46 12h0M514 283h0M243 1092h0M103 27h0M1152 572h0M434 588h0M99 1084h0M503 944h0M966 826h0M1148 581h0M310 1179h0M271 476h0M846 917h0M673 1014h0M548 629h0M961 32h0M384 1238h0M903 604h0M930 589h0M1262 497h0M271 1222h0M1161 951h0M1013 670h0M375 242h0M731 895h0M981 1107h0M901 823h0M1217 33h0M738 150h0M66 26h0M911 756h0M1173 659h0M900 584h0M152 1110h0M541 671h0M538 666h0M212 214h0M1184 501h0M915 504h0M298 634h0M179 709h0M1239 128h0M930 450h0M1063 298h0M557 1094h0M655 241h0M1122 634h0M217 864h0M234 140h0M1002 708h0M415 920h0M1261 452h0M443 1052h0M384 357h0M963 271h0M302 167h0M501 12h0M1152 97h0M317 1098h0M171 228h0M7 1076h0M805 318h0M620 602h0M259 605h0M1102 640h0M1072 375h0M1136 923h0M351 108h0M458 713h0M93 314h0M1219 559h0M670 466h0M983 615h0M1037 863h0M438 271h0M974 501h0M346 207h0M599 404h0M355 1157h0M325 903h0M1047 152h0M841 145h0M657 1084h0M327 856h0M121 833h0M49 218h0M986 838h0M967 719h0M541 1153h0M105 641h0M279 664h0M795 677h0M439 235h0M136 441h0M899 369h0M1027 1056h0M1137 244h0M237 475h0M988 1134h0M44 446h0M1179 326h0M699 283h0M1283 65h0M474 1137h0M1064 360h0M1086 1006h0M243 1268h0M450 10h0M743 740h0M190 1108h0M341 918h0M649 998h0M1101 1158h0M748 939h0M82 107h0M686 286h0M400 1218h0M864 943h0M626 350h0M700 45h0M1196 76h0M1125 765h0M163 39h0M1256 187h0M1062 493h0M1227 773h0M346 834h0M707 1148h0M421 1281h0M1022 529h0M587 638h0M218 974h0M462 374h0M978 1095h0M939 171h0M372 1233h0M254 392h0M759 632h0M881 858h0M107 1003h0M336 230h0M976 910h0M631 1007h0M168 1129h0M1014 889h0M1073 1208h0M941 1217h0M73 622h0M751 1053h0M206 769h0M182 46h0M349 1261h0M426 569h0M169 589h0M1126 438h0M397 385h0M240 821h0M513 1181h0M146 1050h0M651 321h0M251 714h0M252 1243h0M818 761h0M1157 338h0M602 1097h0M953 645h0M510 468h0M870 1276h0M1018 1085h0M854 1033h0M900 797h0M689 48h0M1069 1055h0M331 167h0M843 558h0M986 758h0M1065 748h0M830 1238h0M495 333h0M544 1086h0M4 135h0M1192 946h0M620 53h0M167 524h0M904 17h0M19 1261h0M948 1149h0M624 1287h0M424 647h0M381 1202h0M544 341h0M739 638h0M302 446h0M203 932h0M176 1260h0M1196 1166h0M286 648h0M334 659h0M559 129h0M66 42h0M1107 1182h0M89 58h0M302 697h0M239 833h0M293 898h0M4 1102h0M276 1224h0M126 852h0M768 166h0M895 297h0M32 1131h0M243 313h0M663 687h0M1281 835h0M1066 236h0M918 698h0M651 110h0M778 787h0M317 1282h0M440 1222h0M497 1217h0M155 485h0M59 562h0M435 626h0M1125 620h0M828 388h0M249 680h0M304 1113h0M215 912h0M758 127h0M728 359h0M129 1138h0M707 1199h0M1139 185h0M257 828h0M8 970h0M378 471h0M544 851h0M366 495h0M57 188h0M1200 449h0M640 640h0M149 935h0M1190 1004h0M1072 187h0M323 860h0M241 284h0M979 440h0M99 76h0M123 161h0M818 576h0M1052 43h0M885 1282h0M716 241h0M894 343h0M317 66h0M593 985h0M909 1297h0M437 9h0M78 205h0M126 687h0M833 658h0M1167 593h0M1260 195h0M1249 646h0M920 1224h0M511 419h0M868 1296h0M779 1292h0M1086 398h0M628 542h0M1125 304h0M464 734h0M4 346h0M978 207h0M165 1138h0M441 337h0M1268 280h0M132 698h0M940 360h0M1262 433h0M606 180h0M606 36h0M235 1293h0M52 397h0M952 265h0M1251 1263h0M1242 1210h0M205 189h0M615 118h0M1207 1042h0M1188 121h0M642 618h0M309 431h0M974 323h0M1196 355h0M1163 820h0M986 42h0M361 388h0M2 551h0M1282 1112h0M328 667h0M11 764h0M939 503h0M350 433h0M1075 961h0M724 576h0M593 379h0M19 336h0M271 261h0M1212 221h0M470 229h0M1228 347h0M1210 1298h0M1221 348h0M810 411h0M164 180h0M835 252h0M972 977h0M803 1203h0M306 302h0M399 1098h0M1098 1284h0M933 204h0M573 495h0M179 111h0M1272 622h0M856 535h0M1004 337h0M378 240h0M273 572h0M297 257h0M758 141h0M1172 566h0M1253 906h0M1053 427h0M736 182h0M227 149h0M1050 359h0M758 722h0M1240 493h0M1252 338h0M781 286h0M960 957h0M208 1263h0M367 267h0M444 1085h0M478 720h0M844 301h0M14 213h0M1091 692h0M722 1158h0M1172 888h0M100 718h0M538 355h0M230 1292h0M49 1005h0M1257 406h0M1095 770h0M258 767h0M38 156h0M368 808h0M110 808h0M15 534h0M337 998h0M69 1305h0M607 95h0M728 31h0M699 639h0M510 156h0M1091 1194h0M1074 709h0M1065 1085h0M616 352h0M680 1176h0M397 922h0M939 235h0M320 370h0M655 521h0M968 1238h0M251 754h0M867 447h0M732 140h0M1020 129h0M78 245h0M65 643h0M945 54h0M581 1048h0M630 797h0M1120 958h0M93 311h0M1221 678h0M1221 407h0M704 972h0M1272 468h0M1117 708h0M798 757h0M906 1006h0M91 54h0M601 423h0M473 171h0M318 1076h0M1249 495h0M463 1033h0M966 413h0M534 1166h0M59 833h0M715 507h0M693 585h0M1226 1006h0M641 889h0M116 128h0M1222 1111h0M1018 617h0M92 873h0M938 814h0M404 1131h0M607 433h0M365 527h0M1083 120h0M209 1019h0M1139 1204h0M730 692h0M722 716h0M493 1146h0M51 877h0M728 949h0M408 1005h0M749 667h0M353 785h0M1216 756h0M1027 37h0M451 587h0M172 577h0M1000 1274h0M816 623h0M312 777h0M1278 839h0M219 293h0M312 952h0M708 75h0M1252 1014h0M992 491h0M393 108h0M561 167h0M1240 356h0M219 240h0M1008 295h0M1060 988h0M1029 1056h0M801 495h0M1016 850h0M357 984h0M223 559h0M589 1173h0M594 230h0M732 893h0M225 845h0M905 24h0M954 707h0M14 1250h0M748 127h0M373 1281h0M1173 580h0M1118 1124h0M1013 750h0M42 1021h0M979 949h0M159 1080h0M769 239h0M355 497h0M511 493h0M533 1115h0M757 1038h0M1024 1205h0M1104 898h0M363 305h0M83 1225h0M899 44h0M429 358h0M762 258h0M1052 991h0M1130 1127h0M810 938h0M1273 1129h0M420 380h0M389 931h0M684 1179h0M253 56h0M101 34h0M1022 556h0M24 908h0M220 39h0M514 761h0M1244 166h0M781 694h0M1141 1181h0M79 690h0M1184 1082h0M998 192h0M7 811h0M1089 298h0M341 85h0M496 981h0M323 1204h0M272 1080h0M818 759h0M615 35h0M908 1172h0M16 773h0M1179 473h0M959 876h0M413 664h0M1201 852h0M883 693h0M1071 77h0M867 65h0M657 474h0M1049 655h0M1137 16h0M647 954h0M440 800h0M15 261h0M208 1214h0M54 226h0M1004 583h0M1276 1247h0M710 458h0M211 562h0M413 849h0M971 733h0M1020 83h0M1070 1026h0M416 125h0M211 475h0M472 97h0M349 1222h0M361 496h0M1172 326h0M1237 443h0M805 590h0M892 277h0M436 1205h0M377 959h0M896 1086h0M835 452h0M337 1273h0M1260 650h0M1257 1142h0M859 507h0M1186 138h0M18 834h0M91 528h0M773 569h0M426 988h0M1027 72h0M549 1191h0M675 441h0M919 81h0M800 316h0M704 860h0M715 852h0M590 636h0M204 842h0M855 137h0M8 1238h0M943 991h0M609 926h0M1139 625h0M691 1082h0M805 810h0M485 198h0M1026 1258h0M1131 1038h0M554 1298h0M291 1091h0M1243 53h0M440 466h0M726 828h0M388 696h0M1198 1004h0M947 1166h0M1169 1167h0M1251 51h0M890 1040h0M92 1145h0M78 1170h0M1167 1258h0M542 332h0M120 308h0M1168 296h0M574 734h0M681 1215h0M1068 746h0M1008 1274h0M682 340h0M421 637h0M582 1181h0M1200 571h0M971 13h0M89 1143h0M837 1229h0M734 1285h0M133 599h0M1196 672h0M489 701h0M1106 647h0M259 106h0M1144 180h0M379 1092h0M739 966h0M539 549h0M719 299h0M90 1147h0M101 929h0M585 1263h0M967 513h0M119 1172h0M1256 600h0M728 324h0M236 1205h0M1136 1063h0M97 1238h0M1099 383h0M485 631h0M458 1285h0M584 844h0M1253 551h0M666 1197h0M656 77h0M227 254h0M623 789h0M695 650h0M482 577h0M870 335h0M952 954h0M1152 94h0M309 338h0M14 818h0M824 996h0M1238 493h0M349 172h0M1034 807h0M258 646h0M538 984h0M738 610h0M196 344h0M537 696h0M1251 795h0M622 364h0M177 323h0M1145 401h0M551 532h0M401 441h0M295 360h0M1093 1021h0M1148 122h0M1194 162h0M335 448h0M1122 1271h0M1080 38h0M707 1012h0M510 76h0M873 521h0M42 998h0M622 571h0M358 1230h0M407 560h0M463 337h0M868 770h0M331 1210h0M1202 661h0M1136 1179h0M691 310h0M891 1266h0M99 456h0M834 355h0M34 747h0M1161 1004h0M1215 248h0M1059 1021h0M1143 463h0" stroke="#bababa" stroke-width="3.6" stroke-linecap="round" filter="url(#sb1)"/><path d="M954 1272h0M571 949h0M519 1193h0M494 650h0M219 264h0M632 1049h0M317 426h0M640 483h0M1080 581h0M1283 583h0M357 857h0M1213 1158h0M633 967h0M638 388h0M1240 649h0M345 1168h0M321 1128h0M1021 265h0M87 423h0M72 1235h0M85 72h0M1007 735h0M23 628h0M154 253h0M1115 674h0M492 1162h0M779 1231h0M705 1104h0M214 49h0M1197 123h0M449 280h0M806 549h0M719 609h0M1150 126h0M818 469h0M1079 800h0M914 1229h0M185 235h0M771 226h0M219 930h0M1279 1142h0M131 221h0M1030 295h0M904 1062h0M23 996h0M441 531h0M680 122h0M180 30h0M62 622h0M442 1289h0M729 1061h0M356 731h0M251 61h0M1238 1251h0M1208 388h0M1246 1193h0M543 1250h0M144 73h0M1041 753h0M658 85h0M713 703h0M1135 703h0M329 1033h0M986 896h0M676 987h0M1187 303h0M168 462h0M121 1273h0M1194 725h0M934 127h0M1166 1138h0M855 1234h0M257 818h0M1258 570h0M1142 226h0M883 1217h0M981 1287h0M912 164h0M152 428h0M35 649h0M777 246h0M169 1181h0M547 490h0M311 753h0M832 946h0M1243 111h0M264 692h0M468 997h0M72 667h0M575 613h0M1262 342h0M1131 1121h0M959 219h0M306 1081h0M56 729h0M248 937h0M1156 1183h0M325 753h0M160 281h0M95 852h0M264 813h0M449 1141h0M1112 674h0M1153 448h0M668 645h0M369 501h0M514 371h0M424 613h0M246 718h0M434 176h0M730 892h0M835 9h0M612 980h0M260 396h0M475 457h0M1141 583h0M419 1151h0M352 1131h0M1043 500h0M1018 694h0M843 1093h0M136 662h0M819 787h0M341 1171h0M329 807h0M983 1029h0M904 32h0M1261 627h0M289 320h0M846 907h0M711 271h0M32 1004h0M546 97h0M179 1246h0M158 358h0M798 126h0M1158 19h0M1267 1129h0M1044 1020h0M259 447h0M224 298h0M702 864h0M633 1225h0M443 879h0M934 663h0M237 185h0M584 675h0M297 960h0M397 689h0M164 26h0M979 1096h0M976 123h0M932 232h0M445 765h0M811 955h0M1116 98h0M909 627h0M938 153h0M273 374h0M585 660h0M164 66h0M959 1204h0M640 595h0M264 329h0M218 1228h0M289 937h0M344 861h0M31 836h0M1265 828h0M836 502h0M15 1073h0M905 445h0M1162 307h0M373 572h0M843 635h0M870 552h0M673 1281h0M1260 293h0M637 343h0M1108 765h0M17 834h0M1172 41h0M1164 91h0M1218 1046h0M758 1187h0M61 1145h0M161 589h0M855 957h0M50 615h0M564 197h0M82 952h0M314 207h0M827 176h0M852 1132h0M1125 827h0M105 1246h0M1227 1258h0M53 425h0M118 1063h0M673 412h0M422 1243h0M1011 414h0M379 47h0M1144 590h0M286 710h0M1012 766h0M561 938h0M1198 895h0M166 1020h0M113 846h0M1194 340h0M1174 1165h0M368 109h0M596 16h0M452 1146h0M775 1177h0M1064 1271h0M1208 726h0M966 1166h0M981 802h0M607 656h0M678 651h0M1199 563h0M951 30h0M466 1162h0M651 111h0M1075 882h0M763 862h0M973 500h0M643 205h0M259 1254h0M772 1006h0M952 8h0M992 579h0M1230 1090h0M735 983h0M973 974h0M893 925h0M836 516h0M301 287h0M306 913h0M1253 843h0M814 107h0M170 617h0M870 73h0M133 256h0M1092 186h0M1003 1053h0M828 69h0M907 66h0M922 665h0M847 1011h0M580 1206h0M350 623h0M366 866h0M937 1066h0M57 1049h0M1025 89h0M281 1247h0M586 1300h0M841 1235h0M670 999h0M1225 814h0M888 1045h0M378 690h0M1094 351h0M105 439h0M338 494h0M216 1134h0M224 104h0M334 659h0M1134 1298h0M1099 57h0M366 484h0M206 715h0M478 134h0M1154 512h0M883 453h0M852 961h0M115 349h0M1237 963h0M516 7h0M652 784h0M1109 670h0M111 1176h0M1096 1302h0M951 636h0M9 783h0M981 180h0M503 900h0M305 307h0M697 972h0M419 1137h0M1158 305h0M637 1092h0M1202 634h0M640 519h0M1267 98h0M459 1259h0M404 879h0M254 799h0M297 737h0M762 498h0M862 12h0M60 329h0M350 572h0M74 76h0M640 1035h0M114 988h0M553 1198h0M782 27h0M912 1148h0M819 745h0M705 1178h0M1028 849h0M899 538h0M544 1047h0M650 507h0M48 386h0M286 472h0M430 419h0M103 257h0M885 831h0M694 291h0M643 825h0M306 1008h0M722 791h0M826 676h0M1083 335h0M962 358h0M395 536h0M709 85h0M707 38h0M725 591h0M1183 779h0M583 114h0M951 1020h0M976 142h0M769 318h0M1015 714h0M955 1023h0M281 555h0M1098 233h0M1045 508h0M451 1131h0M1113 727h0M199 1302h0M680 1148h0M321 546h0M814 397h0M530 545h0M720 558h0M1217 766h0M171 673h0M181 1164h0M903 881h0M394 416h0M552 1255h0M1209 855h0M367 1074h0M70 307h0M702 1065h0M471 1287h0M1194 539h0M813 183h0M1155 96h0M801 109h0M1216 734h0M668 694h0M375 1116h0M1223 850h0M431 102h0M401 245h0M412 1254h0M212 264h0M1257 871h0M1186 586h0M623 1188h0M445 411h0M1106 221h0" stroke="#e6e6e6" stroke-width="4.4" stroke-linecap="round" filter="url(#sb2)"/><path d="M766 528h0M395 734h0M1102 517h0M38 476h0M719 657h0M344 605h0M952 472h0M771 873h0M549 18h0M1069 479h0M582 1225h0M834 596h0M655 329h0M89 498h0M883 611h0M35 553h0M726 918h0M328 1145h0M751 212h0M884 451h0M970 583h0M1053 786h0M14 545h0M706 1060h0M188 216h0M1252 399h0M1208 1003h0M635 527h0M514 1165h0M866 40h0M554 804h0M544 663h0M48 482h0M1243 386h0M294 190h0M1141 251h0M116 237h0M516 406h0M1142 1001h0M1092 723h0M1074 1239h0M1028 1220h0M937 886h0M819 109h0M1017 1174h0M1125 1100h0M436 838h0M272 150h0M920 364h0M763 968h0M146 589h0M819 859h0M974 191h0M1248 904h0M1250 1097h0M77 1111h0M136 352h0M323 818h0M185 223h0M1189 258h0M168 540h0M117 1096h0M575 103h0M418 374h0M394 513h0M275 376h0M829 846h0M558 1188h0M1266 660h0M974 846h0M908 1264h0M1191 1284h0M1075 618h0M201 433h0M356 21h0M288 1203h0M302 893h0M155 55h0M905 896h0M1186 750h0M230 294h0M435 648h0M295 1304h0M787 586h0M561 233h0M649 1176h0M879 812h0M178 982h0M206 1085h0M473 1240h0" stroke="#ffffff" stroke-width="5.8" stroke-linecap="round" filter="url(#sb2)"/><g><circle cx="454.8" cy="425.4" r="7.5" fill="url(#star)"/><circle cx="653.0" cy="661.0" r="8.2" fill="url(#star)"/><circle cx="493.0" cy="775.7" r="6.8" fill="url(#star)"/><circle cx="677.5" cy="937.0" r="6.8" fill="url(#star)"/><circle cx="775.7" cy="235.5" r="6.0" fill="url(#star)"/><circle cx="919.0" cy="20.0" r="5.2" fill="url(#star)"/><circle cx="939.4" cy="112.7" r="6.0" fill="url(#star)"/><circle cx="1156.0" cy="172.0" r="6.0" fill="url(#star)"/><circle cx="1217.7" cy="194.5" r="5.2" fill="url(#star)"/><circle cx="1107.0" cy="215.0" r="5.2" fill="url(#star)"/><circle cx="1013.0" cy="829.0" r="6.0" fill="url(#star)"/><circle cx="550.6" cy="1140.0" r="5.2" fill="url(#star)"/><circle cx="288.7" cy="1068.0" r="5.2" fill="url(#star)"/><circle cx="206.8" cy="305.0" r="5.2" fill="url(#star)"/><circle cx="137.0" cy="360.0" r="5.2" fill="url(#star)"/><circle cx="75.8" cy="59.5" r="5.2" fill="url(#star)"/><circle cx="865.7" cy="1219.0" r="5.2" fill="url(#star)"/><circle cx="1017.0" cy="1185.0" r="5.2" fill="url(#star)"/><circle cx="1089.0" cy="1109.0" r="5.2" fill="url(#star)"/><circle cx="1275.0" cy="211.0" r="5.2" fill="url(#star)"/><circle cx="1271.0" cy="538.0" r="4.5" fill="url(#star)"/><circle cx="1178.0" cy="1297.0" r="5.2" fill="url(#star)"/><circle cx="616.0" cy="1295.0" r="5.2" fill="url(#star)"/><circle cx="51.0" cy="1144.0" r="5.2" fill="url(#star)"/><circle cx="561.0" cy="150.0" r="4.5" fill="url(#star)"/><circle cx="324.0" cy="1254.0" r="4.5" fill="url(#star)"/><circle cx="1140.0" cy="1071.0" r="4.5" fill="url(#star)"/></g><rect width="1283" height="4" fill="#000"/></svg>
<div style="position:absolute;left:2249px;top:186px;width:22px;height:1306px;box-sizing:border-box;background:#e6e7e8;"></div>
<div style="position:absolute;left:2249px;top:186px;width:22px;height:21px;box-sizing:border-box;background:linear-gradient(90deg,#fff,#f0f1f2);border-bottom:1px solid #c8cacc;"></div>
<svg style="position:absolute;left:2253px;top:191px;" width="14" height="10" viewBox="0 0 14 10"><path d="M1 8.5 L7 2 L13 8.5Z" fill="#74787c"/></svg>
<div style="position:absolute;left:2249px;top:207px;width:22px;height:1248px;box-sizing:border-box;background:linear-gradient(90deg,#fff,#f2f3f4);border-bottom:1px solid #c8cacc;"></div>
<div style="position:absolute;left:2249px;top:1471px;width:22px;height:21px;box-sizing:border-box;background:linear-gradient(90deg,#fff,#f0f1f2);border-top:1px solid #c8cacc;"></div>
<svg style="position:absolute;left:2253px;top:1477px;" width="14" height="10" viewBox="0 0 14 10"><path d="M1 1.5 L7 8 L13 1.5Z" fill="#74787c"/></svg>
<div style="position:absolute;left:966px;top:1492px;width:1283px;height:22px;box-sizing:border-box;background:#e6e7e8;border-top:1px solid #d0d2d4;"></div>
<div style="position:absolute;left:966px;top:1493px;width:21px;height:21px;box-sizing:border-box;background:linear-gradient(#fff,#f0f1f2);border-right:1px solid #c8cacc;"></div>
<svg style="position:absolute;left:971px;top:1497px;" width="10" height="14" viewBox="0 0 10 14"><path d="M8 1 L1.5 7 L8 13Z" fill="#74787c"/></svg>
<div style="position:absolute;left:1144px;top:1493px;width:908px;height:21px;box-sizing:border-box;background:linear-gradient(#fff,#f2f3f4);border-left:1px solid #c8cacc;border-right:1px solid #c8cacc;"></div>
<div style="position:absolute;left:2228px;top:1493px;width:21px;height:21px;box-sizing:border-box;background:linear-gradient(#fff,#f0f1f2);border-left:1px solid #c8cacc;"></div>
<svg style="position:absolute;left:2233px;top:1497px;" width="10" height="14" viewBox="0 0 10 14"><path d="M2 1 L8.5 7 L2 13Z" fill="#74787c"/></svg>
<div style="position:absolute;left:2249px;top:1492px;width:22px;height:22px;box-sizing:border-box;background:#eff0f1;border-top:1px solid #c8cacc;border-left:1px solid #c8cacc;"></div>
<div style="position:absolute;left:28px;top:1534px;width:22px;height:7px;box-sizing:border-box;background:linear-gradient(#e2e3e4,#cfd0d1);border:1px solid #c0c2c4;border-radius:3px;"></div>
<div style="position:absolute;left:55px;top:1533.5px;width:2193px;height:7.5px;box-sizing:border-box;background:linear-gradient(#3a86b5,#7cc6ec 30%,#70bde6 70%,#2d6d96);border-radius:2px;"></div>
<div style="position:absolute;left:42px;top:1526.5px;width:19.5px;height:19.0px;box-sizing:border-box;background:linear-gradient(#fdfdfd,#f1f2f3);border:1px solid #b6b8ba;border-radius:4px;box-shadow:0 0 1px rgba(0,0,0,0.15);"></div>
<div style="position:absolute;left:1141px;top:1526.5px;width:19.5px;height:19.0px;box-sizing:border-box;background:linear-gradient(#fdfdfd,#f1f2f3);border:1px solid #b6b8ba;border-radius:4px;box-shadow:0 0 1px rgba(0,0,0,0.15);"></div>
<div style="position:absolute;left:2237px;top:1526.5px;width:19.5px;height:19.0px;box-sizing:border-box;background:linear-gradient(#fdfdfd,#f1f2f3);border:1px solid #b6b8ba;border-radius:4px;box-shadow:0 0 1px rgba(0,0,0,0.15);"></div>
<div style="position:absolute;left:117px;top:1553px;width:37px;height:37px;box-sizing:border-box;background:#dedfe0;border:1px solid #bfc1c3;border-radius:3px;"></div>
<svg style="position:absolute;left:120px;top:1556px;" width="31" height="31" viewBox="0 0 31 31"><path d="M15.5 6 L13 10 H18Z M15.5 25 L13 21 H18Z M6 15.5 L10 13 V18Z M25 15.5 L21 13 V18Z" fill="#2f3337"/><rect x="14.2" y="14.2" width="2.6" height="2.6" fill="#2f3337"/></svg>
<div style="position:absolute;left:247px;top:1554px;width:1.5px;height:36px;box-sizing:border-box;background:#74787c;"></div>
<div style="position:absolute;left:247px;top:1553px;width:3px;height:1.5px;box-sizing:border-box;background:#8a8d90;"></div>
<div style="position:absolute;left:-607px;width:2000px;text-align:center;top:1560.53px;font-size:23px;line-height:23px;color:#2f3337;font-weight:normal;white-space:pre;">Shadows</div>
<div style="position:absolute;left:538px;top:1553px;width:117px;height:37px;box-sizing:border-box;background:#fcfcfc;border:1px solid #b5b7b9;border-radius:3px;"></div>
<div style="position:absolute;left:633px;top:1554px;width:21px;height:35px;box-sizing:border-box;background:linear-gradient(#fcfcfc,#eceded);border-left:1px solid #bfc1c3;border-radius:0 3px 3px 0;"></div>
<svg style="position:absolute;left:638px;top:1561px;" width="12" height="20" viewBox="0 0 12 20"><path d="M0.5 7 L6 1.5 L11.5 7Z" fill="#7b7e81"/><path d="M0.5 13 L6 18.5 L11.5 13Z" fill="#7b7e81"/></svg>
<div style="position:absolute;left:544.5px;top:1561.53px;font-size:23px;line-height:23px;color:#2f3337;font-weight:normal;white-space:pre;">0.0062</div>
<div style="position:absolute;left:748px;top:1554px;width:1.5px;height:36px;box-sizing:border-box;background:#74787c;"></div>
<div style="position:absolute;left:748px;top:1553px;width:3px;height:1.5px;box-sizing:border-box;background:#8a8d90;"></div>
<div style="position:absolute;left:-103px;width:2000px;text-align:center;top:1560.53px;font-size:23px;line-height:23px;color:#2f3337;font-weight:normal;white-space:pre;">Midtones</div>
<div style="position:absolute;left:1044px;top:1553px;width:117px;height:37px;box-sizing:border-box;background:#fcfcfc;border:1px solid #b5b7b9;border-radius:3px;"></div>
<div style="position:absolute;left:1139px;top:1554px;width:21px;height:35px;box-sizing:border-box;background:linear-gradient(#fcfcfc,#eceded);border-left:1px solid #bfc1c3;border-radius:0 3px 3px 0;"></div>
<svg style="position:absolute;left:1144px;top:1561px;" width="12" height="20" viewBox="0 0 12 20"><path d="M0.5 7 L6 1.5 L11.5 7Z" fill="#7b7e81"/><path d="M0.5 13 L6 18.5 L11.5 13Z" fill="#7b7e81"/></svg>
<div style="position:absolute;left:1050.5px;top:1561.53px;font-size:23px;line-height:23px;color:#2f3337;font-weight:normal;white-space:pre;">0.0033</div>
<div style="position:absolute;left:1255px;top:1554px;width:1.5px;height:36px;box-sizing:border-box;background:#74787c;"></div>
<div style="position:absolute;left:1255px;top:1553px;width:3px;height:1.5px;box-sizing:border-box;background:#8a8d90;"></div>
<div style="position:absolute;left:409px;width:2000px;text-align:center;top:1560.53px;font-size:23px;line-height:23px;color:#2f3337;font-weight:normal;white-space:pre;">Highlights</div>
<div style="position:absolute;left:1560px;top:1553px;width:117px;height:37px;box-sizing:border-box;background:#fcfcfc;border:1px solid #b5b7b9;border-radius:3px;"></div>
<div style="position:absolute;left:1655px;top:1554px;width:21px;height:35px;box-sizing:border-box;background:linear-gradient(#fcfcfc,#eceded);border-left:1px solid #bfc1c3;border-radius:0 3px 3px 0;"></div>
<svg style="position:absolute;left:1660px;top:1561px;" width="12" height="20" viewBox="0 0 12 20"><path d="M0.5 7 L6 1.5 L11.5 7Z" fill="#7b7e81"/><path d="M0.5 13 L6 18.5 L11.5 13Z" fill="#7b7e81"/></svg>
<div style="position:absolute;left:1566.5px;top:1561.53px;font-size:23px;line-height:23px;color:#2f3337;font-weight:normal;white-space:pre;">1.0000</div>
<div style="position:absolute;left:1770px;top:1554px;width:1.5px;height:36px;box-sizing:border-box;background:#74787c;"></div>
<div style="position:absolute;left:1770px;top:1553px;width:3px;height:1.5px;box-sizing:border-box;background:#8a8d90;"></div>
<div style="position:absolute;left:1867px;top:1553px;width:37px;height:37px;box-sizing:border-box;background:linear-gradient(#fdfdfd,#eceded);border:1px solid #bfc1c3;border-radius:3px;"></div>
<svg style="position:absolute;left:1875px;top:1561px;" width="22" height="21" viewBox="0 0 22 21"><path d="M0.8 19.5 V1 H1.9 V19.5Z M1.9 19.5 V9 L3.5 7 L4.6 3 L6.6 0.8 L8.6 4 L9.6 8.5 L11.2 11 L12.6 13.5 L14.2 15.5 L16.2 17 L19 19.5Z" fill="#2a2e32"/></svg>
<div style="position:absolute;left:1997px;top:1553px;width:37px;height:37px;box-sizing:border-box;background:linear-gradient(#fdfdfd,#eceded);border:1px solid #bfc1c3;border-radius:3px;"></div>
<div style="position:absolute;left:2127px;top:1553px;width:37px;height:37px;box-sizing:border-box;background:linear-gradient(#fdfdfd,#eceded);border:1px solid #bfc1c3;border-radius:3px;"></div>
<div style="position:absolute;left:1145.5px;width:2000px;text-align:center;top:1560.53px;font-size:23px;line-height:23px;color:#2f3337;font-weight:normal;white-space:pre;"><u>1</u></div>
</body></html>
